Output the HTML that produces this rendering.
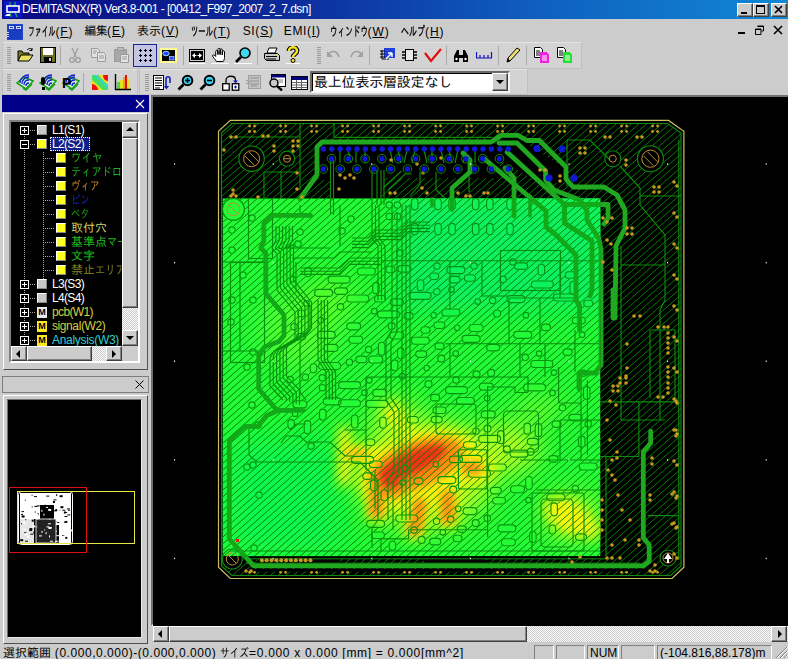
<!DOCTYPE html><html lang="ja"><head><meta charset="utf-8"><title>DEMITASNX(R) Ver3.8-001</title><style>
*{box-sizing:border-box}
html,body{margin:0;padding:0}
body{width:788px;height:659px;position:relative;overflow:hidden;background:#cccccc;font-family:"Liberation Sans","IPAGothic","Noto Sans CJK JP",sans-serif;font-size:12px;color:#000}
.abs{position:absolute}
#title{left:2px;top:0;width:786px;height:19px;background:linear-gradient(90deg,#0a0a82 0%,#0c2a9a 35%,#0f62c0 70%,#1087d6 100%);color:#fff}
#title .txt{position:absolute;left:20px;top:2px;font-size:12px;white-space:nowrap;letter-spacing:0px}
.wbtn{position:absolute;top:3px;width:16px;height:14px;background:#cccccc;border:1px solid;border-color:#fff #404040 #404040 #fff;box-shadow:inset -1px -1px 0 #808080}
#menu{left:0;top:19px;width:788px;height:23px;background:#cccccc}
.mi{position:absolute;top:24px;height:15px;line-height:15px;white-space:nowrap;font-size:12px;transform-origin:0 50%}
.mi u{text-decoration:underline}
.tbar{position:absolute;background:#d3d3d3;border:1px solid #c0c0c0;border-top-color:#e4e4e4}
.grip{position:absolute;width:4px;background:repeating-linear-gradient(180deg,#9a9a9a 0,#9a9a9a 1px,transparent 1px,transparent 2px)}
.sep{position:absolute;width:1px;background:#a8a8a8}
.ico{position:absolute}
.sunken{border:1px solid;border-color:#808080 #fff #fff #808080}
.raised{border:1px solid;border-color:#fff #404040 #404040 #fff;box-shadow:inset -1px -1px 0 #808080;background:#cccccc}
.dither{background-color:#fbfbfb;background-image:linear-gradient(45deg,#cccccc 25%,transparent 25%,transparent 75%,#cccccc 75%),linear-gradient(45deg,#cccccc 25%,transparent 25%,transparent 75%,#cccccc 75%);background-size:2px 2px;background-position:0 0,1px 1px}
.tree{font-size:12px;line-height:14px;white-space:nowrap}
.tree div{position:absolute;white-space:nowrap}
.pane{position:absolute;top:645px;height:16px;border:1px solid;border-color:#808080 #fff #fff #808080;font-size:12px;line-height:14px;padding-left:2px;white-space:nowrap;overflow:hidden}
</style></head><body>
<div id="title" class="abs">
<svg class="abs" style="left:2px;top:1px" width="18" height="17" viewBox="0 0 18 17"><rect x="0" y="0" width="18" height="17" fill="#0a14c8"/><path d="M6 1v4M11 1v4M6 11l1 5M11 11l2 5" stroke="#20a040" stroke-width="1.4" fill="none"/><rect x="3" y="5" width="12" height="6" fill="none" stroke="#fff" stroke-width="1.6"/><path d="M1 15h5v-2h-3z" fill="#fff"/></svg>
<span class="txt"><span style="letter-spacing:-0.52px">DEMITASNX(R) Ver3.8-001 - [00412_F997_2007_2_7.dsn]</span></span>
<div class="wbtn" style="left:735px"><div class="abs" style="left:3px;top:8px;width:6px;height:2px;background:#000"></div></div>
<div class="wbtn" style="left:751px"><div class="abs" style="left:2px;top:1px;width:9px;height:9px;border:1px solid #000;border-top-width:2px"></div></div>
<div class="wbtn" style="left:769px"><svg class="abs" style="left:2px;top:1px" width="10" height="9" viewBox="0 0 10 9"><path d="M1 1l7 7M8 1l-7 7" stroke="#000" stroke-width="1.7"/></svg></div>
</div>
<div id="menu" class="abs"></div>
<svg class="abs" style="left:7px;top:24px" width="16" height="16" viewBox="0 0 16 16"><rect width="16" height="16" fill="#1a3cc0"/><rect x="0" y="0" width="16" height="16" fill="none" stroke="#2a50e0"/><rect x="2.5" y="2.5" width="4" height="2" fill="none" stroke="#cfd8ff"/><rect x="9.5" y="2.5" width="4" height="2" fill="none" stroke="#cfd8ff"/><path d="M1 8v1M1 10v1M1 12v1" stroke="#fff" stroke-width="1.5"/></svg>
<span class="mi" style="left:28.0px"><span style="display:inline-block;transform:scaleX(0.527);transform-origin:0 50%;margin-right:-24.6px;font-size:13px;-webkit-text-stroke:0.35px #000">ファイル</span><span style="letter-spacing:0.9px">(<u>F</u>)</span></span>
<span class="mi" style="left:84.3px"><span style="letter-spacing:-0.60px">編集</span><span style="letter-spacing:0.9px">(<u>E</u>)</span></span>
<span class="mi" style="left:137.0px"><span style="letter-spacing:0.00px">表示</span><span style="letter-spacing:0.9px">(<u>V</u>)</span></span>
<span class="mi" style="left:191.0px"><span style="display:inline-block;transform:scaleX(0.564);transform-origin:0 50%;margin-right:-17.0px;font-size:13px;-webkit-text-stroke:0.35px #000">ツール</span><span style="letter-spacing:0.9px">(<u>T</u>)</span></span>
<span class="mi" style="left:242.7px"><span style="letter-spacing:0.6px">SI</span><span style="letter-spacing:0.9px">(<u>S</u>)</span></span>
<span class="mi" style="left:283.8px"><span style="letter-spacing:0.6px">EMI</span><span style="letter-spacing:0.9px">(<u>I</u>)</span></span>
<span class="mi" style="left:329.5px"><span style="display:inline-block;transform:scaleX(0.585);transform-origin:0 50%;margin-right:-27.0px;font-size:13px;-webkit-text-stroke:0.35px #000">ウィンドウ</span><span style="letter-spacing:0.9px">(<u>W</u>)</span></span>
<span class="mi" style="left:401.0px"><span style="display:inline-block;transform:scaleX(0.615);transform-origin:0 50%;margin-right:-15.0px;font-size:13px;-webkit-text-stroke:0.35px #000">ヘルプ</span><span style="letter-spacing:0.9px">(<u>H</u>)</span></span>
<div class="abs" style="left:738px;top:32px;width:7px;height:2px;background:#000"></div>
<svg class="abs" style="left:754px;top:25px" width="11" height="11" viewBox="0 0 11 11"><path d="M3.5 1h6v5h-2M3.5 1.5h6" stroke="#000" fill="none"/><path d="M1.5 4h5.500v5.500h-5.500zM1.500 4.500h5.500" stroke="#000" fill="none"/></svg>
<svg class="abs" style="left:773px;top:25px" width="10" height="10" viewBox="0 0 10 10"><path d="M1 1l8 8M9 1l-8 8" stroke="#000" stroke-width="1.6"/></svg>
<div class="tbar" style="left:2px;top:42px;width:580px;height:27px"></div>
<div class="tbar" style="left:2px;top:69px;width:136px;height:26px"></div>
<div class="tbar" style="left:139px;top:69px;width:389px;height:26px"></div>
<div class="grip" style="left:7px;top:47px;height:17px"></div>
<div class="grip" style="left:317px;top:47px;height:17px"></div>
<div class="grip" style="left:7px;top:74px;height:17px"></div>
<div class="grip" style="left:145px;top:74px;height:17px"></div>
<div class="sep" style="left:60px;top:46px;height:19px"></div>
<div class="sep" style="left:183px;top:46px;height:19px"></div>
<div class="sep" style="left:257px;top:46px;height:19px"></div>
<div class="sep" style="left:369px;top:46px;height:19px"></div>
<div class="sep" style="left:446px;top:46px;height:19px"></div>
<div class="sep" style="left:498px;top:46px;height:19px"></div>
<div class="sep" style="left:526px;top:46px;height:19px"></div>
<div class="sep" style="left:83px;top:73px;height:19px"></div>
<svg class="ico" style="left:17px;top:47px" width="17" height="16" viewBox="0 0 17 16"><path d="M1 14V4h4l1 2h6v2" fill="#7a7a20" stroke="#000"/><path d="M1 14l3-6h12l-4 6z" fill="#e8e060" stroke="#000"/><path d="M10 3c2-2 4-2 5 0M15 1v2.500h-2.500" stroke="#000" fill="none"/></svg>
<svg class="ico" style="left:40px;top:47px" width="16" height="16" viewBox="0 0 16 16"><rect x="0.500" y="0.500" width="15" height="15" fill="#6e6e20" stroke="#000"/><rect x="3" y="1" width="10" height="7" fill="#fff"/><rect x="4" y="10" width="8" height="5" fill="#000"/><rect x="9" y="11" width="2" height="3" fill="#d0d0d0"/></svg>
<svg class="ico" style="left:68px;top:47px" width="14" height="17" viewBox="0 0 14 17"><path d="M4 1l4 9M10 1l-4 9" stroke="#9a9a9a" fill="none" stroke-width="1.2"/><circle cx="4" cy="13" r="2.300" fill="none" stroke="#9a9a9a" stroke-width="1.200"/><circle cx="10" cy="13" r="2.300" fill="none" stroke="#9a9a9a" stroke-width="1.200"/></svg>
<svg class="ico" style="left:90px;top:47px" width="17" height="16" viewBox="0 0 17 16"><path d="M1.500 1.500h6l2 2v7h-8z" fill="#e2e2e2" stroke="#9a9a9a"/><path d="M7.500 5.500h6l2 2v7h-8z" fill="#e2e2e2" stroke="#9a9a9a"/><path d="M3 4h4M3 6h3M9 9h5M9 11h5" stroke="#9a9a9a"/></svg>
<svg class="ico" style="left:113px;top:47px" width="17" height="16" viewBox="0 0 17 16"><rect x="1.500" y="2.500" width="12" height="12" fill="#a8a8a8" stroke="#9a9a9a"/><rect x="4.500" y="0.500" width="6" height="3" fill="#bcbcbc" stroke="#9a9a9a"/><path d="M7.500 7.500h8v8h-8z" fill="#e4e4e4" stroke="#9a9a9a"/><path d="M9 10h5M9 12h5" stroke="#9a9a9a"/></svg>
<div class="abs" style="left:133px;top:44px;width:24px;height:23px;background:#c4c4e4;border:1px solid #1a2a8a"></div>
<svg class="ico" style="left:138px;top:48px" width="15" height="15" viewBox="0 0 15 15"><path d="M1.0 2.5h3M2.5 1.0v3" stroke="#000" stroke-width="1"/><path d="M1.0 7.5h3M2.5 6.0v3" stroke="#000" stroke-width="1"/><path d="M1.0 12.5h3M2.5 11.0v3" stroke="#000" stroke-width="1"/><path d="M6.0 2.5h3M7.5 1.0v3" stroke="#000" stroke-width="1"/><path d="M6.0 7.5h3M7.5 6.0v3" stroke="#000" stroke-width="1"/><path d="M6.0 12.5h3M7.5 11.0v3" stroke="#000" stroke-width="1"/><path d="M11.0 2.5h3M12.5 1.0v3" stroke="#000" stroke-width="1"/><path d="M11.0 7.5h3M12.5 6.0v3" stroke="#000" stroke-width="1"/><path d="M11.0 12.5h3M12.5 11.0v3" stroke="#000" stroke-width="1"/></svg>
<svg class="ico" style="left:160px;top:48px" width="17" height="15" viewBox="0 0 17 15"><rect x="0" y="0" width="17" height="15" fill="#ffff90"/><rect x="2" y="2" width="13" height="11" fill="#000"/><ellipse cx="6" cy="5.500" rx="3.200" ry="2.300" fill="#2848ff" stroke="#a0e8ff" stroke-width=".9"/><rect x="9.500" y="8.500" width="4.500" height="3.500" fill="#2848ff" stroke="#90c8ff" stroke-width=".8"/></svg>
<svg class="ico" style="left:189px;top:49px" width="16" height="15" viewBox="0 0 16 15"><rect x="0" y="0" width="16" height="13" fill="#000"/><rect x="1.500" y="1.500" width="13" height="10" fill="none" stroke="#fff" stroke-width=".8"/><path d="M3 6.500l3-2.500v5zM13 6.500l-3-2.500v5z" fill="#fff"/><path d="M6 6.500h1.500M8.500 6.500h1.500" stroke="#fff" stroke-width="1.200"/><rect x="0" y="14" width="16" height="1" fill="#fff"/></svg>
<svg class="ico" style="left:211px;top:47px" width="18" height="17" viewBox="0 0 18 17"><g fill="#fff" stroke="#000" stroke-width="1"><path d="M5.500 14.500C4 12 1.500 10 1.500 8.500c1-1.200 2.300-.2 3.200 1V4.500c0-1.600 2.200-1.600 2.200 0v3V2.500c0-1.600 2.200-1.600 2.200 0v5V3c0-1.600 2.200-1.600 2.200 0v4.800V5c0-1.600 2.200-1.600 2.200 0v5.500c0 2-.8 3-1.300 4z"/><path d="M6.900 7.500V4M9.100 7.500V3M11.300 7.800V4" fill="none"/></g><rect x="0" y="16" width="18" height="1" fill="#fff"/></svg>
<svg class="ico" style="left:234px;top:47px" width="18" height="17" viewBox="0 0 18 17"><circle cx="11" cy="6" r="5" fill="#40d8f0" stroke="#000" stroke-width="1.600"/><path d="M7 10l-5 5" stroke="#000" stroke-width="2.600"/><rect x="0" y="16" width="18" height="1" fill="#fff"/></svg>
<svg class="ico" style="left:263px;top:47px" width="18" height="16" viewBox="0 0 18 16"><path d="M4 6l2-5h8l-2 5z" fill="#fff" stroke="#000"/><path d="M1.500 6.500h13l2 2v5h-13l-2-2z" fill="#c8c8c8" stroke="#000"/><path d="M3 9.500h11M3 12h10" stroke="#000"/><rect x="12" y="8" width="2" height="1" fill="#e0e000"/></svg>
<svg class="ico" style="left:286px;top:46px" width="14" height="18" viewBox="0 0 14 18"><path d="M3 5c0-5 8-5 8 0 0 3-4 3-4 6" fill="none" stroke="#000" stroke-width="4.600"/><path d="M3 5c0-5 8-5 8 0 0 3-4 3-4 6" fill="none" stroke="#f4e420" stroke-width="2.600"/><circle cx="7" cy="14.500" r="2" fill="#f0e020" stroke="#000"/><rect x="0" y="17" width="14" height="1" fill="#fff"/></svg>
<svg class="ico" style="left:326px;top:49px" width="15" height="12" viewBox="0 0 15 12"><path d="M2 6c3-5 9-5 11 2" fill="none" stroke="#a0a0a0" stroke-width="1.600"/><path d="M1 2v6h6z" fill="#a0a0a0"/></svg>
<svg class="ico" style="left:349px;top:49px" width="15" height="12" viewBox="0 0 15 12"><path d="M13 6c-3-5-9-5-11 2" fill="none" stroke="#a0a0a0" stroke-width="1.600"/><path d="M14 2v6h-6z" fill="#a0a0a0"/></svg>
<svg class="ico" style="left:378px;top:47px" width="18" height="16" viewBox="0 0 18 16"><rect x="6" y="1" width="11" height="10" fill="#2040e0"/><path d="M2 4h5M2 7h5M2 10h5M4 3v9h7" stroke="#000" fill="none"/><path d="M8 12l6-6M14 6v4M14 6h-4" stroke="#fff" stroke-width="1.500" fill="none"/></svg>
<svg class="ico" style="left:401px;top:48px" width="17" height="14" viewBox="0 0 17 14"><rect x="4.500" y="1.500" width="8" height="11" fill="#e8e8e8" stroke="#000"/><path d="M1 4h3M1 7h3M1 10h3M13 4h3M13 7h3M13 10h3" stroke="#000" stroke-width="1.400"/></svg>
<svg class="ico" style="left:424px;top:48px" width="18" height="15" viewBox="0 0 18 15"><path d="M1 5l6 8L17 1" fill="none" stroke="#e01010" stroke-width="2.200"/></svg>
<svg class="ico" style="left:452px;top:48px" width="18" height="15" viewBox="0 0 18 15"><path d="M2 14V8l3-6h2v5h4V2h2l3 6v6h-5V10H7v4z" fill="#000"/><circle cx="4.500" cy="11" r="1.200" fill="#fff"/><circle cx="13.500" cy="11" r="1.200" fill="#fff"/></svg>
<svg class="ico" style="left:476px;top:52px" width="17" height="7" viewBox="0 0 17 7"><path d="M0.500 0v6h15V0M4 3v3M8 3v3M12 3v3" fill="none" stroke="#1010c0" stroke-width="1.200"/></svg>
<svg class="ico" style="left:505px;top:47px" width="16" height="17" viewBox="0 0 16 17"><path d="M2 15l1-4L12 1l3 2L5 14z" fill="#e8e070" stroke="#000"/><path d="M2 15l1-4 2 3z" fill="#000"/></svg>
<svg class="ico" style="left:533px;top:47px" width="17" height="16" viewBox="0 0 17 16"><path d="M1.500 0.500h6l2 2v8h-8z" fill="#fff" stroke="#000"/><path d="M3 4h4M3 6h4M3 8h4" stroke="#000"/><path d="M7.500 5.500h6l2 2v8h-8z" fill="#f020e0" stroke="#f020e0"/><path d="M7.500 5.500h6l2 2v8h-8z" fill="none" stroke="#f020e0"/><path d="M9 9h5M9 11h5M9 13h5" stroke="#fff"/></svg>
<svg class="ico" style="left:556px;top:47px" width="17" height="16" viewBox="0 0 17 16"><path d="M1.500 0.500h6l2 2v8h-8z" fill="#fff" stroke="#000"/><path d="M3 4h4M3 6h4M3 8h4" stroke="#000"/><path d="M7.500 5.500h6l2 2v8h-8z" fill="#20e030" stroke="#20e030"/><path d="M7.500 5.500h6l2 2v8h-8z" fill="none" stroke="#20e030"/><path d="M9 9h5M9 11h5M9 13h5" stroke="#fff"/></svg>
<svg class="ico" style="left:16px;top:74px" width="18" height="17" viewBox="0 0 18 17"><path d="M1 9l7-6 9 4-7 8z" fill="#d8f0d8" stroke="#18a018" stroke-width="1.600"/><path d="M8 11c0-3 2-5 5-5M6 10c0-4 3-7 7-7M4 9c0-5 4-8 9-8M10 12c0-2 1-3 3-3" fill="none" stroke="#1020d0" stroke-width="1.300"/><path d="M7 14l3 2 6-6" fill="none" stroke="#18a018" stroke-width="1.600"/></svg>
<svg class="ico" style="left:39px;top:74px" width="18" height="17" viewBox="0 0 18 17"><path d="M1 9l7-6 9 4-7 8z" fill="#d8f0d8" stroke="#18a018" stroke-width="1.600"/><path d="M8 11c0-3 2-5 5-5M6 10c0-4 3-7 7-7M4 9c0-5 4-8 9-8M10 12c0-2 1-3 3-3" fill="none" stroke="#1020d0" stroke-width="1.300"/><path d="M7 14l3 2 6-6" fill="none" stroke="#18a018" stroke-width="1.600"/></svg>
<div class="abs" style="left:41px;top:77px;width:4px;height:8px;background:#000;border-radius:2px"></div><div class="abs" style="left:42px;top:87px;width:3px;height:3px;background:#000"></div>
<svg class="ico" style="left:62px;top:74px" width="18" height="17" viewBox="0 0 18 17"><path d="M1 9l7-6 9 4-7 8z" fill="#d8f0d8" stroke="#18a018" stroke-width="1.600"/><path d="M8 11c0-3 2-5 5-5M6 10c0-4 3-7 7-7M4 9c0-5 4-8 9-8M10 12c0-2 1-3 3-3" fill="none" stroke="#1020d0" stroke-width="1.300"/><path d="M7 14l3 2 6-6" fill="none" stroke="#18a018" stroke-width="1.600"/></svg>
<div class="abs" style="left:62px;top:76px;font-weight:bold;font-size:14px;line-height:14px;color:#000">P</div>
<svg class="ico" style="left:92px;top:75px" width="16" height="15" viewBox="0 0 16 15"><rect width="16" height="15" fill="#f0e020"/><path d="M0 0h6L16 10v5h-5L0 5z" fill="#40e060"/><path d="M2 0h3L16 11v3z" fill="#40d0e0" opacity=".9"/><path d="M0 9v6h6c0-3-3-6-6-6zM16 6V0h-5c0 3 2 6 5 6z" fill="#f01010"/></svg>
<svg class="ico" style="left:114px;top:74px" width="17" height="17" viewBox="0 0 17 17"><rect x="3" y="8" width="3" height="7" fill="#40e040"/><rect x="6" y="6" width="3" height="9" fill="#e8e020"/><rect x="9" y="3" width="2" height="12" fill="#f0a020"/><rect x="11" y="1" width="2" height="14" fill="#e01010"/><rect x="13" y="5" width="3" height="10" fill="#e8e020"/><path d="M1.500 0v15.500H17" fill="none" stroke="#000" stroke-width="1.400"/></svg>
<svg class="ico" style="left:153px;top:74px" width="18" height="17" viewBox="0 0 18 17"><rect x="0.500" y="1.500" width="10" height="14" fill="#fff" stroke="#000"/><path d="M2 4h7M2 6.500h7M2 9h7M2 11.500h7M2 14h5" stroke="#000"/><path d="M13 14V5c0-3 4-3 4 0v4" fill="none" stroke="#1020c0" stroke-width="1.600"/><path d="M11 12l2.500 3.500L16 12z" fill="#1020c0"/></svg>
<svg class="ico" style="left:177px;top:74px" width="17" height="17" viewBox="0 0 17 17"><circle cx="10.500" cy="6.500" r="4.800" fill="#40d0f0" stroke="#000" stroke-width="2"/><path d="M6.500 10.500l-5 5" stroke="#000" stroke-width="2.800"/><path d="M8 6.500h5" stroke="#000" stroke-width="1.600"/><path d="M10.500 4v5" stroke="#000" stroke-width="1.600"/></svg>
<svg class="ico" style="left:199px;top:74px" width="17" height="17" viewBox="0 0 17 17"><circle cx="10.500" cy="6.500" r="4.800" fill="#40d0f0" stroke="#000" stroke-width="2"/><path d="M6.500 10.500l-5 5" stroke="#000" stroke-width="2.800"/><path d="M8 6.500h5" stroke="#000" stroke-width="1.600"/></svg>
<svg class="ico" style="left:222px;top:74px" width="18" height="17" viewBox="0 0 18 17"><rect x="0.700" y="9.700" width="6.500" height="6.500" fill="#fff" stroke="#000" stroke-width="1.300"/><rect x="10.300" y="9.700" width="6.500" height="6.500" fill="#fff" stroke="#000" stroke-width="1.300"/><path d="M4 9V6c0-5 9.500-5 9.500 0v2" fill="none" stroke="#000" stroke-width="1.300"/><path d="M11 6.500h5l-2.500 3z" fill="#1020c0"/><path d="M12 13h3M13.500 11.500v3" stroke="#1020c0" stroke-width="1.200"/></svg>
<svg class="ico" style="left:245px;top:74px" width="17" height="17" viewBox="0 0 17 17"><rect x="3.500" y="1.500" width="12" height="13" fill="#c4c4c4" stroke="#a0a0a0"/><path d="M5 4h9M5 7h9M5 10h9M1 6l4 2-4 2M6 12h6" stroke="#a0a0a0" fill="none" stroke-width="1.300"/></svg>
<svg class="ico" style="left:268px;top:74px" width="18" height="17" viewBox="0 0 18 17"><rect x="3.500" y="0.500" width="14" height="12" fill="#fff" stroke="#000"/><rect x="4" y="1" width="13" height="2.500" fill="#000080"/><circle cx="6" cy="9" r="4" fill="#c8c8c8" stroke="#000" stroke-width="1.500"/><path d="M9 12l5 4.500" stroke="#000" stroke-width="2.400"/><path d="M10 6h5M11 8h4" stroke="#808080"/></svg>
<svg class="ico" style="left:291px;top:76px" width="18" height="14" viewBox="0 0 18 14"><rect x="0.500" y="0.500" width="16" height="13" fill="#fff" stroke="#000"/><rect x="1" y="1" width="15" height="3" fill="#000080"/><path d="M1 6.500h15M1 9h15M1 11.500h15M5.500 4v9M10.500 4v9" stroke="#606060"/></svg>
<div class="abs" style="left:310px;top:71px;width:200px;height:22px;background:#fff;border:2px solid;border-color:#6a6a6a #f4f4f4 #f4f4f4 #6a6a6a;box-shadow:inset 1px 1px 0 #000"></div>
<div class="abs" id="cbt" style="left:314px;top:73px;font-size:14px;line-height:18px;white-space:nowrap;letter-spacing:-0.2px">最上位表示層設定なし</div>
<div class="abs raised" style="left:492px;top:73px;width:16px;height:18px"><div class="abs" style="left:3px;top:6px;width:0;height:0;border:4px solid transparent;border-top:4px solid #000;border-bottom:0"></div></div>
<div class="abs" style="left:2px;top:95px;width:147px;height:17px;background:#00008a"></div>
<svg class="abs" style="left:135px;top:99px" width="10" height="10" viewBox="0 0 10 10"><path d="M1 1l8 8M9 1l-8 8" stroke="#fff" stroke-width="1.100"/></svg>
<div class="abs" style="left:3px;top:113px;width:145px;height:257px;border:1px solid;border-color:#fff #505050 #505050 #fff;background:#cccccc"></div>
<div class="abs" style="left:9px;top:120px;width:131px;height:243px;border:2px solid;border-color:#808080 #fff #fff #808080"></div>
<div class="abs tree" style="left:11px;top:122px;width:111px;height:224px;background:#000;overflow:hidden" id="treebox">
<div style="left:13px;top:12px;width:1px;height:210px;background:repeating-linear-gradient(180deg,#aaa 0,#aaa 1px,transparent 1px,transparent 2px)"></div>
<div style="left:32px;top:30px;width:1px;height:127px;background:repeating-linear-gradient(180deg,#aaa 0,#aaa 1px,transparent 1px,transparent 2px)"></div>
<div style="left:9px;top:4px;width:9px;height:9px;border:1px solid #fff;background:#000"></div>
<div style="left:11px;top:8px;width:5px;height:1px;background:#fff"></div>
<div style="left:13px;top:6px;width:1px;height:5px;background:#fff"></div>
<div style="left:19px;top:8px;width:6px;height:1px;background:repeating-linear-gradient(90deg,#aaa 0,#aaa 1px,transparent 1px,transparent 2px)"></div>
<div style="left:26px;top:3px;width:10px;height:10px;background:#c8c8c8;border:1px solid;border-color:#fff #888 #888 #fff"></div>
<div class="tt" style="left:41px;top:1px;height:14px;line-height:14px;color:#fff;transform-origin:0 50%"><span style="letter-spacing:-0.67px">L1(S1)</span></div>
<div style="left:9px;top:18px;width:9px;height:9px;border:1px solid #fff;background:#000"></div>
<div style="left:11px;top:22px;width:5px;height:1px;background:#fff"></div>
<div style="left:19px;top:22px;width:6px;height:1px;background:repeating-linear-gradient(90deg,#aaa 0,#aaa 1px,transparent 1px,transparent 2px)"></div>
<div style="left:26px;top:17px;width:10px;height:10px;background:#ffff20;border:1px solid;border-color:#fff #888 #888 #fff"></div>
<div style="left:39px;top:15px;width:40px;height:14px;background:#10208a;outline:1px dotted #fff;outline-offset:-1px"></div>
<div class="tt" style="left:41px;top:15px;height:14px;line-height:14px;color:#fff;transform-origin:0 50%"><span style="letter-spacing:-0.67px">L2(S2)</span></div>
<div style="left:32px;top:36px;width:12px;height:1px;background:repeating-linear-gradient(90deg,#aaa 0,#aaa 1px,transparent 1px,transparent 2px)"></div>
<div style="left:45px;top:31px;width:10px;height:10px;background:#ffff20;border:1px solid;border-color:#fff #888 #888 #fff"></div>
<div class="tt" style="left:60px;top:29px;height:14px;line-height:14px;color:#20b020;transform-origin:0 50%"><span style="display:inline-block;transform:scaleX(0.872);transform-origin:0 50%;margin-right:-4.6px;">ワイヤ</span></div>
<div style="left:32px;top:50px;width:12px;height:1px;background:repeating-linear-gradient(90deg,#aaa 0,#aaa 1px,transparent 1px,transparent 2px)"></div>
<div style="left:45px;top:45px;width:10px;height:10px;background:#ffff20;border:1px solid;border-color:#fff #888 #888 #fff"></div>
<div class="tt" style="left:60px;top:43px;height:14px;line-height:14px;color:#20b020;transform-origin:0 50%"><span style="display:inline-block;transform:scaleX(0.850);transform-origin:0 50%;margin-right:-12.6px;">ティアドロップ</span></div>
<div style="left:32px;top:64px;width:12px;height:1px;background:repeating-linear-gradient(90deg,#aaa 0,#aaa 1px,transparent 1px,transparent 2px)"></div>
<div style="left:45px;top:59px;width:10px;height:10px;background:#ffff20;border:1px solid;border-color:#fff #888 #888 #fff"></div>
<div class="tt" style="left:60px;top:57px;height:14px;line-height:14px;color:#c08030;transform-origin:0 50%"><span style="display:inline-block;transform:scaleX(0.792);transform-origin:0 50%;margin-right:-7.5px;">ヴィア</span></div>
<div style="left:32px;top:78px;width:12px;height:1px;background:repeating-linear-gradient(90deg,#aaa 0,#aaa 1px,transparent 1px,transparent 2px)"></div>
<div style="left:45px;top:73px;width:10px;height:10px;background:#ffff20;border:1px solid;border-color:#fff #888 #888 #fff"></div>
<div class="tt" style="left:60px;top:71px;height:14px;line-height:14px;color:#1820c0;transform-origin:0 50%"><span style="display:inline-block;transform:scaleX(0.779);transform-origin:0 50%;margin-right:-5.3px;">ピン</span></div>
<div style="left:32px;top:92px;width:12px;height:1px;background:repeating-linear-gradient(90deg,#aaa 0,#aaa 1px,transparent 1px,transparent 2px)"></div>
<div style="left:45px;top:87px;width:10px;height:10px;background:#ffff20;border:1px solid;border-color:#fff #888 #888 #fff"></div>
<div class="tt" style="left:60px;top:85px;height:14px;line-height:14px;color:#109010;transform-origin:0 50%"><span style="display:inline-block;transform:scaleX(0.779);transform-origin:0 50%;margin-right:-5.3px;">ベタ</span></div>
<div style="left:32px;top:106px;width:12px;height:1px;background:repeating-linear-gradient(90deg,#aaa 0,#aaa 1px,transparent 1px,transparent 2px)"></div>
<div style="left:45px;top:101px;width:10px;height:10px;background:#ffff20;border:1px solid;border-color:#fff #888 #888 #fff"></div>
<div class="tt" style="left:60px;top:99px;height:14px;line-height:14px;color:#d0d060;transform-origin:0 50%">取付穴</div>
<div style="left:32px;top:120px;width:12px;height:1px;background:repeating-linear-gradient(90deg,#aaa 0,#aaa 1px,transparent 1px,transparent 2px)"></div>
<div style="left:45px;top:115px;width:10px;height:10px;background:#ffff20;border:1px solid;border-color:#fff #888 #888 #fff"></div>
<div class="tt" style="left:60px;top:113px;height:14px;line-height:14px;color:#20c020;transform-origin:0 50%">基準点<span style="display:inline-block;transform:scaleX(0.850);transform-origin:0 50%;margin-right:-5.4px;">マーク</span></div>
<div style="left:32px;top:134px;width:12px;height:1px;background:repeating-linear-gradient(90deg,#aaa 0,#aaa 1px,transparent 1px,transparent 2px)"></div>
<div style="left:45px;top:129px;width:10px;height:10px;background:#ffff20;border:1px solid;border-color:#fff #888 #888 #fff"></div>
<div class="tt" style="left:60px;top:127px;height:14px;line-height:14px;color:#20c020;transform-origin:0 50%">文字</div>
<div style="left:32px;top:148px;width:12px;height:1px;background:repeating-linear-gradient(90deg,#aaa 0,#aaa 1px,transparent 1px,transparent 2px)"></div>
<div style="left:45px;top:143px;width:10px;height:10px;background:#ffff20;border:1px solid;border-color:#fff #888 #888 #fff"></div>
<div class="tt" style="left:60px;top:141px;height:14px;line-height:14px;color:#808020;transform-origin:0 50%">禁止<span style="display:inline-block;transform:scaleX(0.850);transform-origin:0 50%;margin-right:-5.4px;">エリア</span></div>
<div style="left:9px;top:158px;width:9px;height:9px;border:1px solid #fff;background:#000"></div>
<div style="left:11px;top:162px;width:5px;height:1px;background:#fff"></div>
<div style="left:13px;top:160px;width:1px;height:5px;background:#fff"></div>
<div style="left:19px;top:162px;width:6px;height:1px;background:repeating-linear-gradient(90deg,#aaa 0,#aaa 1px,transparent 1px,transparent 2px)"></div>
<div style="left:26px;top:157px;width:10px;height:10px;background:#c8c8c8;border:1px solid;border-color:#fff #888 #888 #fff"></div>
<div class="tt" style="left:41px;top:155px;height:14px;line-height:14px;color:#fff;transform-origin:0 50%"><span style="letter-spacing:-0.67px">L3(S3)</span></div>
<div style="left:9px;top:172px;width:9px;height:9px;border:1px solid #fff;background:#000"></div>
<div style="left:11px;top:176px;width:5px;height:1px;background:#fff"></div>
<div style="left:13px;top:174px;width:1px;height:5px;background:#fff"></div>
<div style="left:19px;top:176px;width:6px;height:1px;background:repeating-linear-gradient(90deg,#aaa 0,#aaa 1px,transparent 1px,transparent 2px)"></div>
<div style="left:26px;top:171px;width:10px;height:10px;background:#c8c8c8;border:1px solid;border-color:#fff #888 #888 #fff"></div>
<div class="tt" style="left:41px;top:169px;height:14px;line-height:14px;color:#fff;transform-origin:0 50%"><span style="letter-spacing:-0.67px">L4(S4)</span></div>
<div style="left:9px;top:186px;width:9px;height:9px;border:1px solid #fff;background:#000"></div>
<div style="left:11px;top:190px;width:5px;height:1px;background:#fff"></div>
<div style="left:13px;top:188px;width:1px;height:5px;background:#fff"></div>
<div style="left:19px;top:190px;width:6px;height:1px;background:repeating-linear-gradient(90deg,#aaa 0,#aaa 1px,transparent 1px,transparent 2px)"></div>
<div style="left:26px;top:185px;width:10px;height:11px;background:#e8e8e8;color:#000;font-size:9px;line-height:11px;font-weight:bold;text-align:center;overflow:hidden">M</div>
<div class="tt" style="left:41px;top:183px;height:14px;line-height:14px;color:#d0d040;transform-origin:0 50%"><span style="letter-spacing:-0.62px">pcb(W1)</span></div>
<div style="left:9px;top:200px;width:9px;height:9px;border:1px solid #fff;background:#000"></div>
<div style="left:11px;top:204px;width:5px;height:1px;background:#fff"></div>
<div style="left:13px;top:202px;width:1px;height:5px;background:#fff"></div>
<div style="left:19px;top:204px;width:6px;height:1px;background:repeating-linear-gradient(90deg,#aaa 0,#aaa 1px,transparent 1px,transparent 2px)"></div>
<div style="left:26px;top:199px;width:10px;height:11px;background:#ffe820;color:#000;font-size:9px;line-height:11px;font-weight:bold;text-align:center;overflow:hidden">M</div>
<div class="tt" style="left:41px;top:197px;height:14px;line-height:14px;color:#d0d040;transform-origin:0 50%"><span style="letter-spacing:-0.41px">signal(W2)</span></div>
<div style="left:9px;top:214px;width:9px;height:9px;border:1px solid #fff;background:#000"></div>
<div style="left:11px;top:218px;width:5px;height:1px;background:#fff"></div>
<div style="left:13px;top:216px;width:1px;height:5px;background:#fff"></div>
<div style="left:19px;top:218px;width:6px;height:1px;background:repeating-linear-gradient(90deg,#aaa 0,#aaa 1px,transparent 1px,transparent 2px)"></div>
<div style="left:26px;top:213px;width:10px;height:11px;background:#ffe820;color:#000;font-size:9px;line-height:11px;font-weight:bold;text-align:center;overflow:hidden">M</div>
<div class="tt" style="left:41px;top:211px;height:14px;line-height:14px;color:#30d0d0;transform-origin:0 50%"><span style="letter-spacing:-0.31px">Analysis(W3)</span></div>
</div>
<div class="abs dither" style="left:122px;top:122px;width:16px;height:224px"></div>
<div class="abs raised" style="left:122px;top:122px;width:16px;height:16px"><div class="abs" style="left:3px;top:4px;width:0;height:0;border:4px solid transparent;border-bottom:4px solid #000;border-top:0"></div></div>
<div class="abs raised" style="left:122px;top:138px;width:16px;height:170px"></div>
<div class="abs raised" style="left:122px;top:330px;width:16px;height:16px"><div class="abs" style="left:3px;top:5px;width:0;height:0;border:4px solid transparent;border-top:4px solid #000;border-bottom:0"></div></div>
<div class="abs dither" style="left:11px;top:346px;width:111px;height:15px"></div>
<div class="abs raised" style="left:11px;top:346px;width:16px;height:15px"><div class="abs" style="left:4px;top:3px;width:0;height:0;border:4px solid transparent;border-right:4px solid #000;border-left:0"></div></div>
<div class="abs raised" style="left:27px;top:346px;width:65px;height:15px"></div>
<div class="abs raised" style="left:106px;top:346px;width:16px;height:15px"><div class="abs" style="left:5px;top:3px;width:0;height:0;border:4px solid transparent;border-left:4px solid #000;border-right:0"></div></div>
<div class="abs" style="left:122px;top:346px;width:16px;height:15px;background:#cccccc"></div>
<div class="abs" style="left:2px;top:376px;width:147px;height:17px;border:1px solid #7c7c7c;border-right-color:#8c8c8c;background:#cccccc"></div>
<svg class="abs" style="left:135px;top:380px" width="9" height="9" viewBox="0 0 9 9"><path d="M0.500 0.500l8 8M8.500 0.500l-8 8" stroke="#000" stroke-width="1"/></svg>
<div class="abs" style="left:3px;top:395px;width:145px;height:249px;border:1px solid;border-color:#fff #505050 #505050 #fff"></div>
<div class="abs" style="left:7px;top:399px;width:135px;height:239px;border:1px solid;border-color:#707070 #e8e8e8 #e8e8e8 #707070;background:#000"></div>
<svg class="abs" style="left:8px;top:400px" width="133" height="237" viewBox="8 400 133 237">
<rect x="8" y="400" width="133" height="237" fill="#000"/>
<rect x="18.500" y="491.500" width="54" height="53" rx="3" fill="none" stroke="#fff"/>
<g fill="#fff">
<rect x="20" y="493" width="51" height="12"/>
<rect x="20" y="505" width="20" height="14"/><rect x="54" y="505" width="17" height="20"/><rect x="20" y="519" width="14" height="24" opacity=".9"/><rect x="59" y="525" width="12" height="18"/>
</g>
<g fill="#000">
<rect x="31.7" y="519.7" width="2.0" height="2.0"/>
<rect x="43.2" y="521.5" width="3.0" height="1.0"/>
<rect x="64.5" y="516.0" width="3.0" height="1.0"/>
<rect x="29.4" y="528.1" width="3.0" height="2.0"/>
<rect x="43.3" y="524.3" width="1.0" height="1.0"/>
<rect x="51.1" y="535.5" width="3.0" height="1.0"/>
<rect x="56.3" y="525.9" width="1.0" height="1.0"/>
<rect x="57.2" y="522.0" width="2.0" height="1.0"/>
<rect x="60.4" y="506.2" width="3.0" height="2.0"/>
<rect x="65.1" y="512.0" width="2.0" height="1.0"/>
<rect x="55.7" y="521.3" width="1.0" height="1.0"/>
<rect x="24.8" y="499.7" width="1.0" height="1.0"/>
<rect x="67.3" y="514.4" width="3.0" height="1.0"/>
<rect x="40.6" y="533.8" width="3.0" height="1.0"/>
<rect x="46.2" y="513.0" width="1.0" height="1.0"/>
<rect x="53.4" y="538.5" width="2.0" height="2.0"/>
<rect x="52.9" y="501.0" width="2.0" height="2.0"/>
<rect x="64.3" y="520.9" width="3.0" height="2.0"/>
<rect x="30.3" y="533.7" width="3.0" height="1.0"/>
<rect x="34.0" y="496.1" width="3.0" height="1.0"/>
<rect x="24.3" y="532.2" width="2.0" height="1.0"/>
<rect x="21.0" y="513.9" width="2.0" height="1.0"/>
<rect x="22.2" y="523.1" width="1.0" height="1.0"/>
<rect x="55.2" y="509.2" width="2.0" height="2.0"/>
<rect x="31.6" y="494.8" width="1.0" height="1.0"/>
<rect x="25.3" y="519.2" width="1.0" height="1.0"/>
<rect x="34.3" y="505.9" width="3.0" height="1.0"/>
<rect x="68.0" y="509.7" width="2.0" height="1.0"/>
<rect x="63.9" y="511.5" width="2.0" height="2.0"/>
<rect x="38.9" y="535.5" width="3.0" height="2.0"/>
<rect x="25.0" y="540.7" width="3.0" height="1.0"/>
<rect x="41.1" y="528.3" width="1.0" height="1.0"/>
<rect x="41.4" y="505.7" width="2.0" height="2.0"/>
<rect x="36.6" y="531.6" width="3.0" height="1.0"/>
<rect x="21.0" y="523.2" width="3.0" height="1.0"/>
<rect x="22.9" y="523.7" width="2.0" height="1.0"/>
<rect x="53.3" y="510.3" width="3.0" height="1.0"/>
<rect x="56.2" y="494.1" width="1.0" height="2.0"/>
<rect x="21.0" y="511.1" width="3.0" height="1.0"/>
<rect x="34.6" y="522.5" width="1.0" height="1.0"/>
<rect x="29.1" y="530.1" width="3.0" height="1.0"/>
<rect x="34.7" y="511.5" width="1.0" height="2.0"/>
<rect x="53.5" y="499.4" width="3.0" height="1.0"/>
<rect x="52.0" y="506.2" width="2.0" height="1.0"/>
<rect x="53.2" y="524.8" width="1.0" height="1.0"/>
<rect x="49.4" y="539.5" width="3.0" height="1.0"/>
<rect x="41.5" y="534.9" width="1.0" height="1.0"/>
<rect x="36.5" y="524.9" width="3.0" height="1.0"/>
<rect x="33.3" y="531.6" width="1.0" height="2.0"/>
<rect x="66.9" y="508.4" width="3.0" height="1.0"/>
<rect x="62.3" y="509.7" width="3.0" height="1.0"/>
<rect x="59.5" y="509.9" width="1.0" height="1.0"/>
<rect x="34.3" y="531.9" width="2.0" height="1.0"/>
<rect x="37.0" y="513.4" width="2.0" height="2.0"/>
<rect x="40.1" y="538.1" width="1.0" height="1.0"/>
<rect x="20.2" y="539.2" width="3.0" height="2.0"/>
<rect x="41.3" y="539.6" width="3.0" height="1.0"/>
<rect x="21.6" y="515.4" width="3.0" height="2.0"/>
<rect x="45.4" y="507.2" width="2.0" height="1.0"/>
<rect x="62.2" y="535.0" width="2.0" height="1.0"/>
<rect x="59.7" y="495.2" width="3.0" height="2.0"/>
<rect x="65.3" y="536.9" width="2.0" height="2.0"/>
<rect x="22.4" y="516.6" width="1.0" height="1.0"/>
<rect x="44.7" y="504.7" width="1.0" height="2.0"/>
<rect x="46.3" y="495.6" width="3.0" height="1.0"/>
<rect x="36.7" y="505.4" width="3.0" height="1.0"/>
<rect x="59.8" y="496.0" width="1.0" height="1.0"/>
<rect x="26.0" y="536.5" width="1.0" height="1.0"/>
<rect x="31.7" y="506.4" width="1.0" height="1.0"/>
<rect x="43.9" y="521.0" width="2.0" height="1.0"/>
</g>
<rect x="36" y="519" width="20" height="24" fill="#222" stroke="#fff" stroke-width=".8"/>
<g fill="#fff">
<rect x="57.8" y="514.4" width="3.0" height="2.0"/>
<rect x="46.0" y="506.9" width="2.0" height="1.0"/>
<rect x="62.9" y="534.5" width="1.0" height="1.0"/>
<rect x="22.5" y="523.3" width="1.0" height="2.0"/>
<rect x="24.3" y="524.1" width="2.0" height="1.0"/>
<rect x="35.7" y="518.3" width="3.0" height="1.0"/>
<rect x="49.3" y="518.7" width="1.0" height="1.0"/>
<rect x="41.4" y="509.8" width="1.0" height="2.0"/>
<rect x="56.2" y="535.2" width="3.0" height="1.0"/>
<rect x="22.1" y="522.5" width="3.0" height="2.0"/>
<rect x="39.0" y="535.4" width="3.0" height="1.0"/>
<rect x="22.7" y="528.8" width="3.0" height="1.0"/>
<rect x="41.0" y="531.4" width="2.0" height="1.0"/>
<rect x="32.3" y="525.4" width="3.0" height="2.0"/>
<rect x="23.6" y="521.1" width="2.0" height="1.0"/>
<rect x="64.0" y="540.6" width="2.0" height="2.0"/>
<rect x="59.5" y="515.0" width="2.0" height="2.0"/>
<rect x="26.2" y="535.9" width="3.0" height="2.0"/>
<rect x="59.6" y="530.4" width="3.0" height="1.0"/>
<rect x="48.2" y="508.9" width="3.0" height="2.0"/>
<rect x="20.2" y="510.5" width="2.0" height="1.0"/>
<rect x="46.4" y="526.4" width="3.0" height="1.0"/>
<rect x="29.0" y="505.9" width="1.0" height="1.0"/>
<rect x="62.2" y="530.6" width="3.0" height="1.0"/>
<rect x="49.0" y="535.4" width="1.0" height="2.0"/>
<rect x="45.6" y="532.2" width="1.0" height="2.0"/>
<rect x="57.4" y="540.5" width="1.0" height="2.0"/>
<rect x="36.2" y="526.4" width="1.0" height="1.0"/>
<rect x="69.9" y="529.5" width="2.0" height="2.0"/>
<rect x="55.0" y="540.8" width="2.0" height="1.0"/>
<rect x="50.0" y="540.7" width="3.0" height="1.0"/>
<rect x="68.3" y="519.3" width="1.0" height="1.0"/>
<rect x="62.2" y="541.7" width="2.0" height="2.0"/>
<rect x="48.4" y="527.0" width="3.0" height="2.0"/>
<rect x="44.2" y="529.4" width="1.0" height="1.0"/>
<rect x="24.8" y="533.4" width="3.0" height="2.0"/>
<rect x="67.5" y="527.3" width="1.0" height="1.0"/>
<rect x="33.4" y="512.6" width="3.0" height="2.0"/>
<rect x="35.7" y="513.8" width="3.0" height="2.0"/>
<rect x="67.7" y="516.2" width="3.0" height="1.0"/>
<rect x="49.8" y="527.2" width="2.0" height="1.0"/>
<rect x="35.4" y="515.2" width="2.0" height="1.0"/>
<rect x="28.6" y="518.7" width="2.0" height="1.0"/>
<rect x="58.7" y="510.5" width="3.0" height="1.0"/>
<rect x="55.1" y="512.8" width="3.0" height="2.0"/>
<rect x="47.9" y="523.3" width="3.0" height="1.0"/>
<rect x="62.8" y="520.2" width="3.0" height="1.0"/>
<rect x="43.4" y="513.7" width="1.0" height="2.0"/>
<rect x="55.9" y="530.7" width="1.0" height="1.0"/>
<rect x="32.1" y="512.2" width="2.0" height="1.0"/>
</g>
<rect x="17.500" y="491.500" width="117" height="52" fill="none" stroke="#e8e840" stroke-width="1"/>
<rect x="9.500" y="487.500" width="77" height="65" fill="none" stroke="#e01010" stroke-width="1"/>
</svg>
<div class="abs" style="left:151px;top:95px;width:640px;height:531px;border:2px solid;border-color:#707070 #fff #fff #707070;background:#000"></div>
<svg class="abs" style="left:153px;top:97px" width="635" height="529" viewBox="153 97 635 529">
<defs>
<pattern id="hA" width="4.6" height="4.6" patternUnits="userSpaceOnUse" patternTransform="rotate(-43)"><rect x="0" y="0" width="4.600" height="0.800" fill="#009800"/></pattern>
<pattern id="hB" width="4.6" height="4.6" patternUnits="userSpaceOnUse" patternTransform="rotate(-43)"><rect x="0" y="0" width="4.600" height="0.750" fill="#007400"/></pattern>
<filter id="b14" x="-50%" y="-50%" width="200%" height="200%"><feGaussianBlur stdDeviation="12"/></filter>
<filter id="b8" x="-50%" y="-50%" width="200%" height="200%"><feGaussianBlur stdDeviation="6"/></filter>
<filter id="b5" x="-50%" y="-50%" width="200%" height="200%"><feGaussianBlur stdDeviation="4"/></filter>
<filter id="b3" x="-50%" y="-50%" width="200%" height="200%"><feGaussianBlur stdDeviation="3"/></filter>
<clipPath id="cH"><rect x="222.5" y="198.3" width="378.0" height="357.9"/></clipPath>
<clipPath id="cB"><polygon points="232.0,123.5 667.5,123.5 681.0,133.0 681.0,566.0 670.5,575.5 232.0,575.5 221.5,566.0 221.5,133.0"/></clipPath>
<clipPath id="cO"><path clip-rule="evenodd" d="M153 97H788V626H153Z M222.5 198.3H600.5V556.2H222.5Z"/></clipPath>
<g id="hl" stroke="currentColor">
<path d="M215 1.2L690 -416.8"/>
<path d="M215 7.9L690 -410.1"/>
<path d="M215 14.6L690 -403.4"/>
<path d="M215 21.3L690 -396.7"/>
<path d="M215 28.0L690 -390.0"/>
<path d="M215 34.7L690 -383.3"/>
<path d="M215 41.4L690 -376.6"/>
<path d="M215 48.1L690 -369.9"/>
<path d="M215 54.8L690 -363.2"/>
<path d="M215 61.5L690 -356.5"/>
<path d="M215 68.2L690 -349.8"/>
<path d="M215 74.9L690 -343.1"/>
<path d="M215 81.6L690 -336.4"/>
<path d="M215 88.3L690 -329.7"/>
<path d="M215 95.0L690 -323.0"/>
<path d="M215 101.7L690 -316.3"/>
<path d="M215 108.4L690 -309.6"/>
<path d="M215 115.1L690 -302.9"/>
<path d="M215 121.8L690 -296.2"/>
<path d="M215 128.5L690 -289.5"/>
<path d="M215 135.2L690 -282.8"/>
<path d="M215 141.9L690 -276.1"/>
<path d="M215 148.6L690 -269.4"/>
<path d="M215 155.3L690 -262.7"/>
<path d="M215 162.0L690 -256.0"/>
<path d="M215 168.7L690 -249.3"/>
<path d="M215 175.4L690 -242.6"/>
<path d="M215 182.1L690 -235.9"/>
<path d="M215 188.8L690 -229.2"/>
<path d="M215 195.5L690 -222.5"/>
<path d="M215 202.2L690 -215.8"/>
<path d="M215 208.9L690 -209.1"/>
<path d="M215 215.6L690 -202.4"/>
<path d="M215 222.3L690 -195.7"/>
<path d="M215 229.0L690 -189.0"/>
<path d="M215 235.7L690 -182.3"/>
<path d="M215 242.4L690 -175.6"/>
<path d="M215 249.1L690 -168.9"/>
<path d="M215 255.8L690 -162.2"/>
<path d="M215 262.5L690 -155.5"/>
<path d="M215 269.2L690 -148.8"/>
<path d="M215 275.9L690 -142.1"/>
<path d="M215 282.6L690 -135.4"/>
<path d="M215 289.3L690 -128.7"/>
<path d="M215 296.0L690 -122.0"/>
<path d="M215 302.7L690 -115.3"/>
<path d="M215 309.4L690 -108.6"/>
<path d="M215 316.1L690 -101.9"/>
<path d="M215 322.8L690 -95.2"/>
<path d="M215 329.5L690 -88.5"/>
<path d="M215 336.2L690 -81.8"/>
<path d="M215 342.9L690 -75.1"/>
<path d="M215 349.6L690 -68.4"/>
<path d="M215 356.3L690 -61.7"/>
<path d="M215 363.0L690 -55.0"/>
<path d="M215 369.7L690 -48.3"/>
<path d="M215 376.4L690 -41.6"/>
<path d="M215 383.1L690 -34.9"/>
<path d="M215 389.8L690 -28.2"/>
<path d="M215 396.5L690 -21.5"/>
<path d="M215 403.2L690 -14.8"/>
<path d="M215 409.9L690 -8.1"/>
<path d="M215 416.6L690 -1.4"/>
<path d="M215 423.3L690 5.3"/>
<path d="M215 430.0L690 12.0"/>
<path d="M215 436.7L690 18.7"/>
<path d="M215 443.4L690 25.4"/>
<path d="M215 450.1L690 32.1"/>
<path d="M215 456.8L690 38.8"/>
<path d="M215 463.5L690 45.5"/>
<path d="M215 470.2L690 52.2"/>
<path d="M215 476.9L690 58.9"/>
<path d="M215 483.6L690 65.6"/>
<path d="M215 490.3L690 72.3"/>
<path d="M215 497.0L690 79.0"/>
<path d="M215 503.7L690 85.7"/>
<path d="M215 510.4L690 92.4"/>
<path d="M215 517.1L690 99.1"/>
<path d="M215 523.8L690 105.8"/>
<path d="M215 530.5L690 112.5"/>
<path d="M215 537.2L690 119.2"/>
<path d="M215 543.9L690 125.9"/>
<path d="M215 550.6L690 132.6"/>
<path d="M215 557.3L690 139.3"/>
<path d="M215 564.0L690 146.0"/>
<path d="M215 570.7L690 152.7"/>
<path d="M215 577.4L690 159.4"/>
<path d="M215 584.1L690 166.1"/>
<path d="M215 590.8L690 172.8"/>
<path d="M215 597.5L690 179.5"/>
<path d="M215 604.2L690 186.2"/>
<path d="M215 610.9L690 192.9"/>
<path d="M215 617.6L690 199.6"/>
<path d="M215 624.3L690 206.3"/>
<path d="M215 631.0L690 213.0"/>
<path d="M215 637.7L690 219.7"/>
<path d="M215 644.4L690 226.4"/>
<path d="M215 651.1L690 233.1"/>
<path d="M215 657.8L690 239.8"/>
<path d="M215 664.5L690 246.5"/>
<path d="M215 671.2L690 253.2"/>
<path d="M215 677.9L690 259.9"/>
<path d="M215 684.6L690 266.6"/>
<path d="M215 691.3L690 273.3"/>
<path d="M215 698.0L690 280.0"/>
<path d="M215 704.7L690 286.7"/>
<path d="M215 711.4L690 293.4"/>
<path d="M215 718.1L690 300.1"/>
<path d="M215 724.8L690 306.8"/>
<path d="M215 731.5L690 313.5"/>
<path d="M215 738.2L690 320.2"/>
<path d="M215 744.9L690 326.9"/>
<path d="M215 751.6L690 333.6"/>
<path d="M215 758.3L690 340.3"/>
<path d="M215 765.0L690 347.0"/>
<path d="M215 771.7L690 353.7"/>
<path d="M215 778.4L690 360.4"/>
<path d="M215 785.1L690 367.1"/>
<path d="M215 791.8L690 373.8"/>
<path d="M215 798.5L690 380.5"/>
<path d="M215 805.2L690 387.2"/>
<path d="M215 811.9L690 393.9"/>
<path d="M215 818.6L690 400.6"/>
<path d="M215 825.3L690 407.3"/>
<path d="M215 832.0L690 414.0"/>
<path d="M215 838.7L690 420.7"/>
<path d="M215 845.4L690 427.4"/>
<path d="M215 852.1L690 434.1"/>
<path d="M215 858.8L690 440.8"/>
<path d="M215 865.5L690 447.5"/>
<path d="M215 872.2L690 454.2"/>
<path d="M215 878.9L690 460.9"/>
<path d="M215 885.6L690 467.6"/>
<path d="M215 892.3L690 474.3"/>
<path d="M215 899.0L690 481.0"/>
<path d="M215 905.7L690 487.7"/>
<path d="M215 912.4L690 494.4"/>
<path d="M215 919.1L690 501.1"/>
<path d="M215 925.8L690 507.8"/>
<path d="M215 932.5L690 514.5"/>
<path d="M215 939.2L690 521.2"/>
<path d="M215 945.9L690 527.9"/>
<path d="M215 952.6L690 534.6"/>
<path d="M215 959.3L690 541.3"/>
<path d="M215 966.0L690 548.0"/>
<path d="M215 972.7L690 554.7"/>
<path d="M215 979.4L690 561.4"/>
<path d="M215 986.1L690 568.1"/>
<path d="M215 992.8L690 574.8"/>
<path d="M215 999.5L690 581.5"/>
<path d="M215 1006.2L690 588.2"/>
<path d="M215 1012.9L690 594.9"/>
<path d="M215 1019.6L690 601.6"/>
<path d="M215 1026.3L690 608.3"/>
<path d="M215 1033.0L690 615.0"/>
<path d="M215 1039.7L690 621.7"/>
<path d="M215 1046.4L690 628.4"/>
<path d="M215 1053.1L690 635.1"/>
<path d="M215 1059.8L690 641.8"/>
<path d="M215 1066.5L690 648.5"/>
</g>
<g id="tk" fill="none" stroke="currentColor" stroke-linejoin="round" stroke-linecap="round">
<path d="M310.5 215.4 L271.0 215.4 L263.8 223.5 L263.8 240.8 L260.8 247.9 L265.8 253.0 L265.8 293.5 L284.0 315.0 L284.0 335.5 L279.0 341.6 L264.8 346.7 L258.7 354.8 L258.7 389.0 L277.0 410.3 L303.4 410.3" stroke-width="4.8"/>
<path d="M277.0 411.0 L267.0 415.4 L257.7 426.5 L244.5 426.5 L229.3 440.8 L229.3 539.0 L253.7 565.8 L643.3 565.8 L649.2 561.4 L649.2 545.0 L643.3 537.8 L643.3 452.0 L650.7 443.0 L650.7 431.4" stroke-width="4.8"/>
<path d="M300.0 199.0 L317.0 175.0 L317.0 147.0 L322.0 142.0 L491.0 142.0 L501.0 135.4 L518.0 135.4 L527.0 140.5 L539.5 140.5 L566.0 167.0 L566.0 179.0 L573.0 187.0 L604.0 187.0 L617.0 195.0 L625.0 210.0 L625.0 228.0 L616.0 246.0 L615.0 318.0" stroke-width="4.8"/>
<path d="M499.0 143.0 L517.0 143.0 L545.6 171.0 L545.6 180.0 L554.0 190.0 L580.0 200.0 L587.0 211.0 L587.0 220.0 L599.0 239.0 L601.0 250.0 L601.0 365.0 L595.0 373.0 L579.0 373.0 L579.0 389.0" stroke-width="4.8"/>
<path d="M507.0 152.0 L564.5 204.5 L564.5 223.0 L592.0 241.0 L592.0 290.0 L590.0 296.0" stroke-width="4.8"/>
<path d="M484.5 159.0 L546.0 211.0 L546.0 227.0 L555.0 234.0 L576.0 255.0 L576.0 300.0 L579.6 306.0 L579.6 330.0" stroke-width="4.8"/>
<path d="M463.0 153.0 L470.0 160.0 L470.0 172.0 L452.0 188.0 L452.0 208.0" stroke-width="4.8"/>
<path d="M505.0 168.0 L514.0 178.0 L514.0 216.0" stroke-width="4.8"/>
<path d="M530.0 196.0 L530.0 216.0" stroke-width="3.6"/>
<path d="M567.0 204.5 L608.0 204.5 L608.0 218.0 L604.0 224.0" stroke-width="4.8"/>
<path d="M613.0 290.0 L613.0 318.0" stroke-width="4.8"/>
<path d="M452.0 196.0 L452.0 210.0" stroke-width="4.0"/>
<path d="M432.0 199.0 L432.0 206.0" stroke-width="3.6"/>
</g>
<g id="tn" fill="none" stroke="currentColor" stroke-width="1.150">
<path d="M296.0 262.0 L296.0 290.0 L310.0 306.0 L310.0 330.0 L300.0 343.0 L300.0 392.0 L306.0 400.0"/>
<path d="M276.0 226.0 L276.0 240.0 L272.0 248.0 L277.0 254.0 L277.0 290.0 L295.0 312.0 L295.0 338.0 L288.0 346.0 L274.0 351.0 L270.0 358.0 L270.0 386.0 L283.0 400.0 L283.0 400.0"/>
<path d="M279.3 226.0 L279.3 240.0 L275.3 248.0 L280.3 252.0 L280.3 288.0 L298.3 310.0 L298.3 336.0 L291.3 344.0 L277.3 349.0 L273.3 356.0 L273.3 384.0 L286.3 398.0 L286.3 401.0"/>
<path d="M282.6 226.0 L282.6 240.0 L278.6 248.0 L283.6 250.0 L283.6 286.0 L301.6 308.0 L301.6 334.0 L294.6 342.0 L280.6 347.0 L276.6 354.0 L276.6 382.0 L289.6 396.0 L289.6 402.0"/>
<path d="M285.9 226.0 L285.9 240.0 L281.9 248.0 L286.9 248.1 L286.9 284.1 L304.9 306.1 L304.9 332.1 L297.9 340.1 L283.9 345.1 L279.9 352.1 L279.9 380.1 L292.9 394.1 L292.9 403.0"/>
<path d="M289.2 226.0 L289.2 240.0 L285.2 248.0 L290.2 246.1 L290.2 282.1 L308.2 304.1 L308.2 330.1 L301.2 338.1 L287.2 343.1 L283.2 350.1 L283.2 378.1 L296.2 392.1 L296.2 404.0"/>
<path d="M292.5 226.0 L292.5 240.0 L288.5 248.0 L293.5 244.1 L293.5 280.1 L311.5 302.1 L311.5 328.1 L304.5 336.1 L290.5 341.1 L286.5 348.1 L286.5 376.1 L299.5 390.1 L299.5 404.9"/>
<path d="M318.0 300.0 L318.0 360.0 L326.0 372.0 L326.0 400.0"/>
<path d="M321.2 300.0 L321.2 360.0 L329.2 372.0 L329.2 400.0"/>
<path d="M324.4 300.0 L324.4 360.0 L332.4 372.0 L332.4 400.0"/>
<path d="M327.6 300.0 L327.6 360.0 L335.6 372.0 L335.6 400.0"/>
<path d="M286.0 248.0 L330.0 248.0"/>
<path d="M292.0 258.0 L334.0 258.0 L340.0 252.0 L372.0 252.0"/>
<path d="M300.0 268.0 L340.0 268.0 L350.0 258.0 L380.0 258.0"/>
<path d="M300.0 271.2 L340.0 271.2 L350.0 261.2 L380.0 261.2"/>
<path d="M300.0 274.4 L340.0 274.4 L350.0 264.4 L380.0 264.4"/>
<path d="M392.0 205.0 L392.0 330.0 L386.0 340.0 L386.0 400.0 L394.0 412.0 L394.0 470.0 L388.0 480.0 L388.0 520.0"/>
<path d="M397.0 212.0 L397.0 332.0 L391.0 342.0 L391.0 398.0 L399.0 410.0 L399.0 472.0 L393.0 482.0 L393.0 530.0"/>
<path d="M402.0 205.0 L402.0 520.0"/>
<path d="M406.0 205.0 L406.0 520.0"/>
<path d="M410.0 205.0 L410.0 520.0"/>
<path d="M372.0 205.0 L372.0 238.0 L378.0 246.0 L378.0 300.0"/>
<path d="M375.5 205.0 L375.5 238.0 L381.5 246.0 L381.5 300.0"/>
<path d="M379.0 205.0 L379.0 238.0 L385.0 246.0 L385.0 300.0"/>
<path d="M352.0 238.0 L368.0 238.0 L376.0 230.0 L400.0 230.0 L408.0 222.0 L430.0 222.0"/>
<path d="M352.0 241.2 L368.0 241.2 L376.0 233.2 L400.0 233.2 L408.0 225.2 L430.0 225.2"/>
<path d="M352.0 244.4 L368.0 244.4 L376.0 236.4 L400.0 236.4 L408.0 228.4 L430.0 228.4"/>
<path d="M352.0 247.6 L368.0 247.6 L376.0 239.6 L400.0 239.6 L408.0 231.6 L430.0 231.6"/>
<path d="M249.0 426.0 L249.0 455.0 L257.0 462.0 L360.0 462.0 L378.0 480.0 L378.0 520.0 L372.0 528.0 L372.0 548.0"/>
<path d="M281.0 443.0 L286.0 436.0 L300.0 436.0 L306.0 442.0 L330.0 442.0 L345.0 456.0 L354.0 456.0"/>
<path d="M290.0 430.0 L296.0 424.0 L306.0 424.0"/>
<path d="M330.5 157.0 L330.5 215.0"/>
<path d="M333.5 157.0 L333.5 215.0"/>
<path d="M372.0 170.0 L372.0 205.0"/>
<path d="M377.0 170.0 L377.0 205.0"/>
<path d="M381.0 170.0 L381.0 205.0"/>
<path d="M384.0 170.0 L384.0 205.0"/>
<path d="M384.0 187.0 L401.5 171.0"/>
<path d="M388.0 190.0 L405.0 174.0 L412.0 174.0"/>
<path d="M340.0 150.0 L340.0 163.0"/>
<path d="M348.0 150.0 L351.0 163.0"/>
<path d="M356.0 150.0 L356.0 163.0"/>
<path d="M365.0 150.0 L365.0 163.0"/>
<path d="M390.0 150.0 L393.0 163.0"/>
<path d="M398.0 150.0 L401.0 163.0"/>
<path d="M407.0 150.0 L404.0 163.0"/>
<path d="M415.0 150.0 L412.0 163.0"/>
<path d="M424.0 150.0 L427.0 163.0"/>
<path d="M432.0 150.0 L432.0 163.0"/>
<path d="M441.0 150.0 L444.0 163.0"/>
<path d="M449.0 150.0 L452.0 163.0"/>
<path d="M458.0 150.0 L455.0 163.0"/>
<path d="M466.0 150.0 L463.0 163.0"/>
<path d="M475.0 150.0 L475.0 163.0"/>
<path d="M420.0 172.0 L420.0 184.0 L410.0 196.0"/>
<path d="M436.0 172.0 L436.0 190.0 L445.0 198.0"/>
<path d="M469.0 172.0 L469.0 192.0"/>
<rect x="230.5" y="262.5" width="34.0" height="100.0"/>
<rect x="248.5" y="198.5" width="24.0" height="60.0"/>
<rect x="500.5" y="250.5" width="60.0" height="40.0"/>
<rect x="503.5" y="411.0" width="35.0" height="41.0" rx="4"/>
<rect x="541.0" y="499.0" width="32.0" height="48.0" rx="4"/>
<rect x="532.0" y="493.0" width="52.0" height="58.0" rx="2"/>
<rect x="458.4" y="449.7" width="28.6" height="39.3" rx="2"/>
<rect x="436.0" y="404.0" width="40.0" height="30.0" rx="3"/>
<path d="M382.0 260.7 L600.0 260.7"/>
<path d="M450.0 260.7 L450.0 310.0"/>
<path d="M445.0 343.7 L600.0 343.7"/>
<path d="M450.0 343.7 L450.0 377.0"/>
<path d="M366.0 377.0 L528.0 377.0 L528.0 392.5"/>
<path d="M487.6 386.0 L487.6 537.0"/>
<path d="M487.6 387.0 L515.0 387.0 L515.0 392.5 L528.0 392.5"/>
<path d="M536.5 490.0 L600.0 490.0"/>
<path d="M408.6 529.7 L487.4 529.7"/>
<path d="M381.0 538.9 L408.6 538.9 L408.6 529.7"/>
<path d="M381.0 538.9 L381.0 551.0"/>
<path d="M230.0 551.0 L600.0 551.0"/>
<path d="M375.0 470.0 L375.0 508.4"/>
<path d="M581.0 375.5 L581.0 460.5"/>
<path d="M587.4 380.0 L587.4 455.0"/>
<path d="M558.6 367.0 L558.6 403.0"/>
<path d="M558.6 403.0 L581.0 403.0"/>
<path d="M366.0 377.0 L366.0 470.0"/>
<path d="M366.0 430.0 L345.0 430.0"/>
<path d="M509.0 298.0 L509.0 343.7"/>
<path d="M540.0 298.0 L540.0 343.7"/>
<path d="M509.0 298.0 L575.0 298.0"/>
<path d="M560.0 262.0 L560.0 298.0"/>
<path d="M482.0 262.0 L482.0 296.0 L509.0 296.0"/>
<path d="M222.5 351.0 L258.0 351.0"/>
<path d="M240.0 262.0 L240.0 351.0"/>
<path d="M222.5 262.0 L264.0 262.0"/>
<path d="M300.0 205.0 L300.0 215.0"/>
<path d="M340.0 205.0 L340.0 246.0"/>
<path d="M575.0 330.0 L575.0 372.0"/>
<path d="M520.0 343.7 L520.0 377.0"/>
<path d="M545.0 343.7 L545.0 377.0"/>
<path d="M560.0 420.0 L600.0 420.0"/>
<path d="M560.0 420.0 L560.0 460.0"/>
<path d="M520.0 460.0 L600.0 460.0"/>
<circle cx="251.6" cy="158.7" r="12.7"/>
<circle cx="287.0" cy="158.7" r="7.6"/>
<circle cx="650.4" cy="158.7" r="13.0"/>
<circle cx="612.8" cy="158.7" r="8.0"/>
<circle cx="233.4" cy="209.3" r="11.0"/>
<circle cx="232.3" cy="559.0" r="10.0"/>
<circle cx="668.0" cy="558.0" r="8.0"/>
<polygon points="232.0,123.5 667.5,123.5 681.0,133.0 681.0,566.0 670.5,575.5 232.0,575.5 221.5,566.0 221.5,133.0"/>
<path d="M264.0 172.0 L264.0 198.0"/>
<path d="M264.0 172.0 L300.0 172.0"/>
<path d="M281.0 172.0 L281.0 198.0"/>
<path d="M300.0 123.5 L300.0 190.0"/>
<path d="M334.0 123.5 L334.0 137.4"/>
<path d="M334.0 137.4 L492.0 137.4"/>
<path d="M232.0 137.0 L300.0 137.0"/>
<path d="M567.0 140.0 L590.0 140.0 L610.0 160.0"/>
<path d="M567.0 140.0 L567.0 186.0"/>
<path d="M620.0 166.0 L640.0 188.0 L640.0 205.0 L665.0 235.0 L665.0 300.0 L660.0 310.0 L660.0 420.0"/>
<path d="M640.0 196.0 L681.0 196.0"/>
<path d="M621.0 265.0 L665.0 265.0"/>
<path d="M621.0 246.0 L621.0 420.0"/>
<path d="M621.0 420.0 L665.0 420.0"/>
<path d="M650.0 330.0 L675.0 330.0 L675.0 400.0"/>
<path d="M650.0 330.0 L650.0 398.0"/>
<path d="M600.0 401.8 L677.0 401.8"/>
<path d="M638.9 401.8 L638.9 456.5"/>
<path d="M600.0 456.5 L638.9 456.5"/>
<path d="M647.7 515.6 L678.0 515.6"/>
<path d="M678.8 140.0 L678.8 560.0"/>
<path d="M606.0 456.5 L606.0 556.0"/>
</g>
<g id="pl" fill="none" stroke="currentColor" stroke-width="1.150">
<rect x="411.5" y="198.3" width="6.500" height="11.500" rx="3.200"/>
<rect x="434.8" y="198.3" width="6.500" height="11.500" rx="3.200"/>
<rect x="448.8" y="198.3" width="6.500" height="11.500" rx="3.200"/>
<rect x="472.4" y="198.3" width="6.500" height="11.500" rx="3.200"/>
<rect x="486.6" y="198.3" width="6.500" height="11.500" rx="3.200"/>
<rect x="506.8" y="198.3" width="6.500" height="11.500" rx="3.200"/>
<rect x="411.5" y="223.3" width="6.500" height="11.500" rx="3.200"/>
<rect x="434.8" y="223.3" width="6.500" height="11.500" rx="3.200"/>
<rect x="448.8" y="223.3" width="6.500" height="11.500" rx="3.200"/>
<rect x="472.4" y="223.3" width="6.500" height="11.500" rx="3.200"/>
<rect x="486.6" y="223.3" width="6.500" height="11.500" rx="3.200"/>
<rect x="506.8" y="223.3" width="6.500" height="11.500" rx="3.200"/>
<circle cx="389.3" cy="205.0" r="3.200"/>
<circle cx="397.4" cy="205.0" r="3.200"/>
<circle cx="389.3" cy="216.4" r="3.200"/>
<circle cx="397.4" cy="216.4" r="3.200"/>
<circle cx="400.0" cy="253.0" r="3.200"/>
<circle cx="437.0" cy="266.0" r="3.200"/>
<circle cx="474.0" cy="266.0" r="3.200"/>
<circle cx="513.0" cy="262.0" r="3.200"/>
<circle cx="232.0" cy="230.0" r="3.200"/>
<circle cx="232.0" cy="250.0" r="3.200"/>
<circle cx="252.0" cy="218.0" r="3.200"/>
<circle cx="243.0" cy="275.0" r="3.200"/>
<circle cx="232.0" cy="300.0" r="3.200"/>
<circle cx="253.0" cy="300.0" r="3.200"/>
<circle cx="231.0" cy="322.0" r="3.200"/>
<circle cx="298.0" cy="244.0" r="3.200"/>
<circle cx="300.0" cy="232.0" r="3.200"/>
<circle cx="253.0" cy="352.0" r="3.200"/>
<circle cx="247.0" cy="367.0" r="3.200"/>
<circle cx="252.0" cy="405.0" r="3.200"/>
<circle cx="258.0" cy="425.0" r="3.200"/>
<circle cx="342.0" cy="231.0" r="3.200"/>
<circle cx="351.0" cy="219.0" r="3.200"/>
<circle cx="253.0" cy="465.0" r="3.200"/>
<circle cx="259.0" cy="495.0" r="3.200"/>
<circle cx="254.0" cy="548.0" r="3.200"/>
<circle cx="247.0" cy="467.0" r="3.200"/>
<rect x="468.4" y="470.2" width="22.0" height="7.0" rx="3.500"/>
<rect x="481.2" y="410.9" width="14.0" height="7.0" rx="3.500"/>
<circle cx="487.3" cy="518.3" r="3.2"/>
<circle cx="554.0" cy="372.6" r="2.8"/>
<circle cx="294.0" cy="326.7" r="3.2"/>
<circle cx="477.7" cy="301.5" r="2.8"/>
<rect x="346.7" y="322.8" width="14.0" height="7.0" rx="3.500"/>
<rect x="371.4" y="532.0" width="13.0" height="6.5" rx="3.200"/>
<circle cx="583.4" cy="373.3" r="3.2"/>
<circle cx="340.5" cy="306.8" r="3.2"/>
<rect x="535.2" y="423.6" width="6.5" height="13.0" rx="3.200"/>
<rect x="381.0" y="489.7" width="6.5" height="11.0" rx="3.200"/>
<circle cx="433.7" cy="315.3" r="2.8"/>
<rect x="407.4" y="416.5" width="11.0" height="6.5" rx="3.200"/>
<circle cx="292.8" cy="279.1" r="2.8"/>
<rect x="317.2" y="331.4" width="18.0" height="7.0" rx="3.500"/>
<rect x="391.4" y="359.8" width="6.5" height="11.0" rx="3.200"/>
<rect x="510.5" y="485.7" width="14.0" height="7.0" rx="3.500"/>
<circle cx="421.6" cy="539.9" r="3.5"/>
<circle cx="475.7" cy="523.1" r="3.5"/>
<circle cx="455.7" cy="353.5" r="2.8"/>
<rect x="527.3" y="438.3" width="11.0" height="6.5" rx="3.200"/>
<rect x="328.1" y="276.1" width="22.0" height="7.0" rx="3.500"/>
<rect x="565.3" y="271.7" width="11.0" height="6.5" rx="3.200"/>
<circle cx="428.5" cy="384.1" r="3.5"/>
<rect x="292.9" y="400.7" width="14.0" height="7.0" rx="3.500"/>
<circle cx="588.3" cy="423.9" r="3.2"/>
<circle cx="322.4" cy="387.7" r="3.2"/>
<rect x="372.6" y="389.4" width="14.0" height="7.0" rx="3.500"/>
<rect x="583.5" y="386.5" width="6.5" height="13.0" rx="3.200"/>
<rect x="553.2" y="294.0" width="22.0" height="7.0" rx="3.500"/>
<rect x="578.5" y="436.1" width="6.5" height="11.0" rx="3.200"/>
<rect x="433.0" y="407.0" width="13.0" height="6.5" rx="3.200"/>
<rect x="525.7" y="476.5" width="6.5" height="13.0" rx="3.200"/>
<rect x="379.7" y="417.1" width="6.5" height="11.0" rx="3.200"/>
<rect x="579.2" y="463.0" width="18.0" height="7.0" rx="3.500"/>
<circle cx="487.5" cy="428.6" r="3.5"/>
<circle cx="525.2" cy="357.3" r="3.2"/>
<rect x="530.8" y="360.5" width="22.0" height="7.0" rx="3.500"/>
<circle cx="426.7" cy="368.0" r="2.8"/>
<rect x="441.9" y="309.0" width="18.0" height="7.0" rx="3.500"/>
<rect x="372.7" y="282.6" width="6.5" height="11.0" rx="3.200"/>
<rect x="524.0" y="423.1" width="6.5" height="11.0" rx="3.200"/>
<circle cx="458.2" cy="508.8" r="2.8"/>
<rect x="501.4" y="538.7" width="14.0" height="7.0" rx="3.500"/>
<circle cx="306.5" cy="303.4" r="2.8"/>
<rect x="431.2" y="416.3" width="11.0" height="6.5" rx="3.200"/>
<circle cx="476.0" cy="431.2" r="3.2"/>
<circle cx="290.2" cy="379.5" r="3.2"/>
<rect x="548.9" y="455.6" width="9.0" height="6.5" rx="3.200"/>
<rect x="378.4" y="342.2" width="6.5" height="13.0" rx="3.200"/>
<rect x="390.4" y="298.9" width="13.0" height="6.5" rx="3.200"/>
<rect x="575.5" y="533.8" width="11.0" height="6.5" rx="3.200"/>
<circle cx="491.1" cy="372.9" r="3.5"/>
<rect x="552.0" y="420.8" width="9.0" height="6.5" rx="3.200"/>
<circle cx="435.8" cy="464.3" r="2.8"/>
<rect x="462.1" y="335.3" width="18.0" height="7.0" rx="3.500"/>
<rect x="357.3" y="268.0" width="18.0" height="7.0" rx="3.500"/>
<rect x="435.0" y="342.9" width="9.0" height="6.5" rx="3.200"/>
<circle cx="582.1" cy="334.7" r="2.8"/>
<rect x="538.1" y="264.2" width="6.5" height="11.0" rx="3.200"/>
<rect x="429.7" y="273.0" width="9.0" height="6.5" rx="3.200"/>
<rect x="365.9" y="400.3" width="22.0" height="7.0" rx="3.500"/>
<rect x="507.0" y="295.6" width="18.0" height="7.0" rx="3.500"/>
<rect x="369.3" y="461.0" width="13.0" height="6.5" rx="3.200"/>
<rect x="296.6" y="333.4" width="9.0" height="6.5" rx="3.200"/>
<rect x="446.9" y="266.6" width="18.0" height="7.0" rx="3.500"/>
<rect x="459.8" y="455.4" width="22.0" height="7.0" rx="3.500"/>
<circle cx="436.5" cy="521.3" r="3.2"/>
<rect x="488.4" y="464.0" width="18.0" height="7.0" rx="3.500"/>
<rect x="531.3" y="281.0" width="22.0" height="7.0" rx="3.500"/>
<circle cx="487.1" cy="398.3" r="2.8"/>
<circle cx="441.3" cy="358.6" r="3.5"/>
<rect x="449.1" y="276.3" width="11.0" height="6.5" rx="3.200"/>
<circle cx="530.7" cy="451.8" r="3.5"/>
<rect x="417.3" y="279.7" width="6.5" height="11.0" rx="3.200"/>
<rect x="541.5" y="324.1" width="9.0" height="6.5" rx="3.200"/>
<rect x="323.9" y="344.4" width="14.0" height="7.0" rx="3.500"/>
<rect x="351.5" y="415.0" width="6.5" height="13.0" rx="3.200"/>
<rect x="304.2" y="420.6" width="6.5" height="13.0" rx="3.200"/>
<rect x="415.7" y="350.8" width="11.0" height="6.5" rx="3.200"/>
<circle cx="457.2" cy="327.8" r="2.8"/>
<rect x="362.8" y="472.9" width="9.0" height="6.5" rx="3.200"/>
<circle cx="552.5" cy="392.9" r="2.8"/>
<circle cx="506.8" cy="449.4" r="3.5"/>
<rect x="319.5" y="409.1" width="6.5" height="11.0" rx="3.200"/>
<rect x="346.8" y="295.0" width="22.0" height="7.0" rx="3.500"/>
<rect x="433.9" y="322.0" width="11.0" height="6.5" rx="3.200"/>
<rect x="355.9" y="356.1" width="11.0" height="6.5" rx="3.200"/>
<circle cx="405.0" cy="468.4" r="3.2"/>
<rect x="523.6" y="383.9" width="22.0" height="7.0" rx="3.500"/>
<rect x="338.5" y="399.7" width="22.0" height="7.0" rx="3.500"/>
<rect x="514.6" y="262.9" width="13.0" height="6.5" rx="3.200"/>
<rect x="550.9" y="502.8" width="6.5" height="13.0" rx="3.200"/>
<circle cx="374.3" cy="311.2" r="2.8"/>
<rect x="304.7" y="267.6" width="6.5" height="9.0" rx="3.200"/>
<rect x="486.7" y="344.3" width="13.0" height="6.5" rx="3.200"/>
<rect x="478.6" y="435.4" width="22.0" height="7.0" rx="3.500"/>
<rect x="397.5" y="347.8" width="6.5" height="11.0" rx="3.200"/>
<circle cx="525.9" cy="315.2" r="2.8"/>
<rect x="479.3" y="383.1" width="14.0" height="7.0" rx="3.500"/>
<circle cx="497.1" cy="313.5" r="3.5"/>
<rect x="457.3" y="525.8" width="9.0" height="6.5" rx="3.200"/>
<circle cx="305.3" cy="377.2" r="3.2"/>
<rect x="572.3" y="317.2" width="13.0" height="6.5" rx="3.200"/>
<circle cx="451.5" cy="289.6" r="2.8"/>
<rect x="414.1" y="477.8" width="9.0" height="6.5" rx="3.200"/>
<rect x="563.1" y="348.9" width="9.0" height="6.5" rx="3.200"/>
<rect x="323.2" y="397.8" width="18.0" height="7.0" rx="3.500"/>
<circle cx="539.1" cy="353.6" r="2.8"/>
<rect x="529.6" y="531.5" width="6.5" height="11.0" rx="3.200"/>
<circle cx="503.0" cy="279.4" r="3.2"/>
<rect x="409.0" y="292.3" width="22.0" height="7.0" rx="3.500"/>
<rect x="318.6" y="362.5" width="22.0" height="7.0" rx="3.500"/>
<circle cx="295.1" cy="413.7" r="2.8"/>
<rect x="385.9" y="266.2" width="9.0" height="6.5" rx="3.200"/>
<circle cx="575.3" cy="488.5" r="3.2"/>
<rect x="421.0" y="326.7" width="9.0" height="6.5" rx="3.200"/>
<rect x="456.4" y="397.5" width="18.0" height="7.0" rx="3.500"/>
<rect x="437.8" y="476.6" width="18.0" height="7.0" rx="3.500"/>
<rect x="389.9" y="332.0" width="14.0" height="7.0" rx="3.500"/>
<circle cx="301.5" cy="313.5" r="3.5"/>
<rect x="366.6" y="520.3" width="18.0" height="7.0" rx="3.500"/>
<rect x="430.6" y="394.4" width="9.0" height="6.5" rx="3.200"/>
<rect x="397.9" y="265.6" width="13.0" height="6.5" rx="3.200"/>
<rect x="449.4" y="456.1" width="13.0" height="6.5" rx="3.200"/>
<circle cx="453.2" cy="489.6" r="3.5"/>
<rect x="549.1" y="525.0" width="6.5" height="9.0" rx="3.200"/>
<rect x="510.0" y="450.1" width="18.0" height="7.0" rx="3.500"/>
<rect x="492.6" y="497.5" width="13.0" height="6.5" rx="3.200"/>
<circle cx="436.9" cy="291.7" r="3.2"/>
<rect x="404.1" y="312.6" width="9.0" height="6.5" rx="3.200"/>
<circle cx="476.5" cy="374.3" r="3.5"/>
<circle cx="456.0" cy="380.0" r="3.2"/>
<circle cx="450.7" cy="519.3" r="3.2"/>
<rect x="395.8" y="515.0" width="22.0" height="7.0" rx="3.500"/>
<circle cx="320.6" cy="320.2" r="2.8"/>
<rect x="377.5" y="310.9" width="22.0" height="7.0" rx="3.500"/>
<rect x="513.7" y="331.3" width="18.0" height="7.0" rx="3.500"/>
<rect x="374.5" y="295.5" width="11.0" height="6.5" rx="3.200"/>
<circle cx="349.4" cy="362.2" r="3.2"/>
<circle cx="414.1" cy="530.1" r="3.2"/>
<rect x="429.7" y="538.4" width="11.0" height="6.5" rx="3.200"/>
<circle cx="364.5" cy="392.7" r="2.8"/>
<rect x="546.8" y="493.7" width="18.0" height="7.0" rx="3.500"/>
<circle cx="402.3" cy="376.2" r="2.8"/>
<circle cx="492.6" cy="300.5" r="3.2"/>
<rect x="310.2" y="363.7" width="6.5" height="9.0" rx="3.200"/>
<rect x="411.4" y="337.2" width="18.0" height="7.0" rx="3.500"/>
<circle cx="391.6" cy="326.1" r="3.5"/>
<circle cx="322.2" cy="377.8" r="3.2"/>
<rect x="445.5" y="386.6" width="22.0" height="7.0" rx="3.500"/>
<rect x="351.5" y="456.3" width="22.0" height="7.0" rx="3.500"/>
<rect x="497.8" y="524.9" width="18.0" height="7.0" rx="3.500"/>
<rect x="570.0" y="281.2" width="6.5" height="13.0" rx="3.200"/>
<rect x="287.9" y="419.6" width="6.5" height="9.0" rx="3.200"/>
<rect x="370.6" y="479.9" width="6.5" height="11.0" rx="3.200"/>
<rect x="463.0" y="507.6" width="14.0" height="7.0" rx="3.500"/>
<rect x="497.6" y="430.6" width="6.5" height="13.0" rx="3.200"/>
<rect x="469.1" y="324.5" width="14.0" height="7.0" rx="3.500"/>
<rect x="464.4" y="274.7" width="11.0" height="6.5" rx="3.200"/>
<circle cx="311.1" cy="446.1" r="3.2"/>
<circle cx="368.6" cy="349.6" r="3.2"/>
<rect x="348.8" y="336.2" width="14.0" height="7.0" rx="3.500"/>
<circle cx="442.8" cy="532.3" r="2.8"/>
<circle cx="528.4" cy="500.1" r="2.8"/>
<rect x="338.6" y="381.6" width="22.0" height="7.0" rx="3.500"/>
<rect x="365.9" y="439.0" width="9.0" height="6.5" rx="3.200"/>
<rect x="314.6" y="289.4" width="18.0" height="7.0" rx="3.500"/>
<circle cx="369.2" cy="380.3" r="2.8"/>
<rect x="389.2" y="541.2" width="6.5" height="9.0" rx="3.200"/>
<circle cx="562.5" cy="407.8" r="3.2"/>
<rect x="569.0" y="414.3" width="13.0" height="6.5" rx="3.200"/>
<rect x="453.0" y="535.2" width="9.0" height="6.5" rx="3.200"/>
<rect x="583.8" y="300.2" width="9.0" height="6.5" rx="3.200"/>
<rect x="334.5" y="287.9" width="13.0" height="6.5" rx="3.200"/>
<rect x="490.3" y="487.3" width="11.0" height="6.5" rx="3.200"/>
<rect x="463.4" y="441.7" width="13.0" height="6.5" rx="3.200"/>
<rect x="368.7" y="356.0" width="14.0" height="7.0" rx="3.500"/>
<circle cx="402.6" cy="482.5" r="2.8"/>
</g>
<mask id="mH" maskUnits="userSpaceOnUse" x="215" y="115" width="480" height="470"><rect x="215" y="115" width="480" height="470" fill="#fff"/><g fill="#000" stroke="#000" stroke-width="1.500">
<rect x="411.5" y="198.3" width="6.500" height="11.500" rx="3.200"/>
<rect x="434.8" y="198.3" width="6.500" height="11.500" rx="3.200"/>
<rect x="448.8" y="198.3" width="6.500" height="11.500" rx="3.200"/>
<rect x="472.4" y="198.3" width="6.500" height="11.500" rx="3.200"/>
<rect x="486.6" y="198.3" width="6.500" height="11.500" rx="3.200"/>
<rect x="506.8" y="198.3" width="6.500" height="11.500" rx="3.200"/>
<rect x="411.5" y="223.3" width="6.500" height="11.500" rx="3.200"/>
<rect x="434.8" y="223.3" width="6.500" height="11.500" rx="3.200"/>
<rect x="448.8" y="223.3" width="6.500" height="11.500" rx="3.200"/>
<rect x="472.4" y="223.3" width="6.500" height="11.500" rx="3.200"/>
<rect x="486.6" y="223.3" width="6.500" height="11.500" rx="3.200"/>
<rect x="506.8" y="223.3" width="6.500" height="11.500" rx="3.200"/>
<circle cx="389.3" cy="205.0" r="3.200"/>
<circle cx="397.4" cy="205.0" r="3.200"/>
<circle cx="389.3" cy="216.4" r="3.200"/>
<circle cx="397.4" cy="216.4" r="3.200"/>
<circle cx="400.0" cy="253.0" r="3.200"/>
<circle cx="437.0" cy="266.0" r="3.200"/>
<circle cx="474.0" cy="266.0" r="3.200"/>
<circle cx="513.0" cy="262.0" r="3.200"/>
<circle cx="232.0" cy="230.0" r="3.200"/>
<circle cx="232.0" cy="250.0" r="3.200"/>
<circle cx="252.0" cy="218.0" r="3.200"/>
<circle cx="243.0" cy="275.0" r="3.200"/>
<circle cx="232.0" cy="300.0" r="3.200"/>
<circle cx="253.0" cy="300.0" r="3.200"/>
<circle cx="231.0" cy="322.0" r="3.200"/>
<circle cx="298.0" cy="244.0" r="3.200"/>
<circle cx="300.0" cy="232.0" r="3.200"/>
<circle cx="253.0" cy="352.0" r="3.200"/>
<circle cx="247.0" cy="367.0" r="3.200"/>
<circle cx="252.0" cy="405.0" r="3.200"/>
<circle cx="258.0" cy="425.0" r="3.200"/>
<circle cx="342.0" cy="231.0" r="3.200"/>
<circle cx="351.0" cy="219.0" r="3.200"/>
<circle cx="253.0" cy="465.0" r="3.200"/>
<circle cx="259.0" cy="495.0" r="3.200"/>
<circle cx="254.0" cy="548.0" r="3.200"/>
<circle cx="247.0" cy="467.0" r="3.200"/>
<rect x="468.4" y="470.2" width="22.0" height="7.0" rx="3.500"/>
<rect x="481.2" y="410.9" width="14.0" height="7.0" rx="3.500"/>
<circle cx="487.3" cy="518.3" r="3.2"/>
<circle cx="554.0" cy="372.6" r="2.8"/>
<circle cx="294.0" cy="326.7" r="3.2"/>
<circle cx="477.7" cy="301.5" r="2.8"/>
<rect x="346.7" y="322.8" width="14.0" height="7.0" rx="3.500"/>
<rect x="371.4" y="532.0" width="13.0" height="6.5" rx="3.200"/>
<circle cx="583.4" cy="373.3" r="3.2"/>
<circle cx="340.5" cy="306.8" r="3.2"/>
<rect x="535.2" y="423.6" width="6.5" height="13.0" rx="3.200"/>
<rect x="381.0" y="489.7" width="6.5" height="11.0" rx="3.200"/>
<circle cx="433.7" cy="315.3" r="2.8"/>
<rect x="407.4" y="416.5" width="11.0" height="6.5" rx="3.200"/>
<circle cx="292.8" cy="279.1" r="2.8"/>
<rect x="317.2" y="331.4" width="18.0" height="7.0" rx="3.500"/>
<rect x="391.4" y="359.8" width="6.5" height="11.0" rx="3.200"/>
<rect x="510.5" y="485.7" width="14.0" height="7.0" rx="3.500"/>
<circle cx="421.6" cy="539.9" r="3.5"/>
<circle cx="475.7" cy="523.1" r="3.5"/>
<circle cx="455.7" cy="353.5" r="2.8"/>
<rect x="527.3" y="438.3" width="11.0" height="6.5" rx="3.200"/>
<rect x="328.1" y="276.1" width="22.0" height="7.0" rx="3.500"/>
<rect x="565.3" y="271.7" width="11.0" height="6.5" rx="3.200"/>
<circle cx="428.5" cy="384.1" r="3.5"/>
<rect x="292.9" y="400.7" width="14.0" height="7.0" rx="3.500"/>
<circle cx="588.3" cy="423.9" r="3.2"/>
<circle cx="322.4" cy="387.7" r="3.2"/>
<rect x="372.6" y="389.4" width="14.0" height="7.0" rx="3.500"/>
<rect x="583.5" y="386.5" width="6.5" height="13.0" rx="3.200"/>
<rect x="553.2" y="294.0" width="22.0" height="7.0" rx="3.500"/>
<rect x="578.5" y="436.1" width="6.5" height="11.0" rx="3.200"/>
<rect x="433.0" y="407.0" width="13.0" height="6.5" rx="3.200"/>
<rect x="525.7" y="476.5" width="6.5" height="13.0" rx="3.200"/>
<rect x="379.7" y="417.1" width="6.5" height="11.0" rx="3.200"/>
<rect x="579.2" y="463.0" width="18.0" height="7.0" rx="3.500"/>
<circle cx="487.5" cy="428.6" r="3.5"/>
<circle cx="525.2" cy="357.3" r="3.2"/>
<rect x="530.8" y="360.5" width="22.0" height="7.0" rx="3.500"/>
<circle cx="426.7" cy="368.0" r="2.8"/>
<rect x="441.9" y="309.0" width="18.0" height="7.0" rx="3.500"/>
<rect x="372.7" y="282.6" width="6.5" height="11.0" rx="3.200"/>
<rect x="524.0" y="423.1" width="6.5" height="11.0" rx="3.200"/>
<circle cx="458.2" cy="508.8" r="2.8"/>
<rect x="501.4" y="538.7" width="14.0" height="7.0" rx="3.500"/>
<circle cx="306.5" cy="303.4" r="2.8"/>
<rect x="431.2" y="416.3" width="11.0" height="6.5" rx="3.200"/>
<circle cx="476.0" cy="431.2" r="3.2"/>
<circle cx="290.2" cy="379.5" r="3.2"/>
<rect x="548.9" y="455.6" width="9.0" height="6.5" rx="3.200"/>
<rect x="378.4" y="342.2" width="6.5" height="13.0" rx="3.200"/>
<rect x="390.4" y="298.9" width="13.0" height="6.5" rx="3.200"/>
<rect x="575.5" y="533.8" width="11.0" height="6.5" rx="3.200"/>
<circle cx="491.1" cy="372.9" r="3.5"/>
<rect x="552.0" y="420.8" width="9.0" height="6.5" rx="3.200"/>
<circle cx="435.8" cy="464.3" r="2.8"/>
<rect x="462.1" y="335.3" width="18.0" height="7.0" rx="3.500"/>
<rect x="357.3" y="268.0" width="18.0" height="7.0" rx="3.500"/>
<rect x="435.0" y="342.9" width="9.0" height="6.5" rx="3.200"/>
<circle cx="582.1" cy="334.7" r="2.8"/>
<rect x="538.1" y="264.2" width="6.5" height="11.0" rx="3.200"/>
<rect x="429.7" y="273.0" width="9.0" height="6.5" rx="3.200"/>
<rect x="365.9" y="400.3" width="22.0" height="7.0" rx="3.500"/>
<rect x="507.0" y="295.6" width="18.0" height="7.0" rx="3.500"/>
<rect x="369.3" y="461.0" width="13.0" height="6.5" rx="3.200"/>
<rect x="296.6" y="333.4" width="9.0" height="6.5" rx="3.200"/>
<rect x="446.9" y="266.6" width="18.0" height="7.0" rx="3.500"/>
<rect x="459.8" y="455.4" width="22.0" height="7.0" rx="3.500"/>
<circle cx="436.5" cy="521.3" r="3.2"/>
<rect x="488.4" y="464.0" width="18.0" height="7.0" rx="3.500"/>
<rect x="531.3" y="281.0" width="22.0" height="7.0" rx="3.500"/>
<circle cx="487.1" cy="398.3" r="2.8"/>
<circle cx="441.3" cy="358.6" r="3.5"/>
<rect x="449.1" y="276.3" width="11.0" height="6.5" rx="3.200"/>
<circle cx="530.7" cy="451.8" r="3.5"/>
<rect x="417.3" y="279.7" width="6.5" height="11.0" rx="3.200"/>
<rect x="541.5" y="324.1" width="9.0" height="6.5" rx="3.200"/>
<rect x="323.9" y="344.4" width="14.0" height="7.0" rx="3.500"/>
<rect x="351.5" y="415.0" width="6.5" height="13.0" rx="3.200"/>
<rect x="304.2" y="420.6" width="6.5" height="13.0" rx="3.200"/>
<rect x="415.7" y="350.8" width="11.0" height="6.5" rx="3.200"/>
<circle cx="457.2" cy="327.8" r="2.8"/>
<rect x="362.8" y="472.9" width="9.0" height="6.5" rx="3.200"/>
<circle cx="552.5" cy="392.9" r="2.8"/>
<circle cx="506.8" cy="449.4" r="3.5"/>
<rect x="319.5" y="409.1" width="6.5" height="11.0" rx="3.200"/>
<rect x="346.8" y="295.0" width="22.0" height="7.0" rx="3.500"/>
<rect x="433.9" y="322.0" width="11.0" height="6.5" rx="3.200"/>
<rect x="355.9" y="356.1" width="11.0" height="6.5" rx="3.200"/>
<circle cx="405.0" cy="468.4" r="3.2"/>
<rect x="523.6" y="383.9" width="22.0" height="7.0" rx="3.500"/>
<rect x="338.5" y="399.7" width="22.0" height="7.0" rx="3.500"/>
<rect x="514.6" y="262.9" width="13.0" height="6.5" rx="3.200"/>
<rect x="550.9" y="502.8" width="6.5" height="13.0" rx="3.200"/>
<circle cx="374.3" cy="311.2" r="2.8"/>
<rect x="304.7" y="267.6" width="6.5" height="9.0" rx="3.200"/>
<rect x="486.7" y="344.3" width="13.0" height="6.5" rx="3.200"/>
<rect x="478.6" y="435.4" width="22.0" height="7.0" rx="3.500"/>
<rect x="397.5" y="347.8" width="6.5" height="11.0" rx="3.200"/>
<circle cx="525.9" cy="315.2" r="2.8"/>
<rect x="479.3" y="383.1" width="14.0" height="7.0" rx="3.500"/>
<circle cx="497.1" cy="313.5" r="3.5"/>
<rect x="457.3" y="525.8" width="9.0" height="6.5" rx="3.200"/>
<circle cx="305.3" cy="377.2" r="3.2"/>
<rect x="572.3" y="317.2" width="13.0" height="6.5" rx="3.200"/>
<circle cx="451.5" cy="289.6" r="2.8"/>
<rect x="414.1" y="477.8" width="9.0" height="6.5" rx="3.200"/>
<rect x="563.1" y="348.9" width="9.0" height="6.5" rx="3.200"/>
<rect x="323.2" y="397.8" width="18.0" height="7.0" rx="3.500"/>
<circle cx="539.1" cy="353.6" r="2.8"/>
<rect x="529.6" y="531.5" width="6.5" height="11.0" rx="3.200"/>
<circle cx="503.0" cy="279.4" r="3.2"/>
<rect x="409.0" y="292.3" width="22.0" height="7.0" rx="3.500"/>
<rect x="318.6" y="362.5" width="22.0" height="7.0" rx="3.500"/>
<circle cx="295.1" cy="413.7" r="2.8"/>
<rect x="385.9" y="266.2" width="9.0" height="6.5" rx="3.200"/>
<circle cx="575.3" cy="488.5" r="3.2"/>
<rect x="421.0" y="326.7" width="9.0" height="6.5" rx="3.200"/>
<rect x="456.4" y="397.5" width="18.0" height="7.0" rx="3.500"/>
<rect x="437.8" y="476.6" width="18.0" height="7.0" rx="3.500"/>
<rect x="389.9" y="332.0" width="14.0" height="7.0" rx="3.500"/>
<circle cx="301.5" cy="313.5" r="3.5"/>
<rect x="366.6" y="520.3" width="18.0" height="7.0" rx="3.500"/>
<rect x="430.6" y="394.4" width="9.0" height="6.5" rx="3.200"/>
<rect x="397.9" y="265.6" width="13.0" height="6.5" rx="3.200"/>
<rect x="449.4" y="456.1" width="13.0" height="6.5" rx="3.200"/>
<circle cx="453.2" cy="489.6" r="3.5"/>
<rect x="549.1" y="525.0" width="6.5" height="9.0" rx="3.200"/>
<rect x="510.0" y="450.1" width="18.0" height="7.0" rx="3.500"/>
<rect x="492.6" y="497.5" width="13.0" height="6.5" rx="3.200"/>
<circle cx="436.9" cy="291.7" r="3.2"/>
<rect x="404.1" y="312.6" width="9.0" height="6.5" rx="3.200"/>
<circle cx="476.5" cy="374.3" r="3.5"/>
<circle cx="456.0" cy="380.0" r="3.2"/>
<circle cx="450.7" cy="519.3" r="3.2"/>
<rect x="395.8" y="515.0" width="22.0" height="7.0" rx="3.500"/>
<circle cx="320.6" cy="320.2" r="2.8"/>
<rect x="377.5" y="310.9" width="22.0" height="7.0" rx="3.500"/>
<rect x="513.7" y="331.3" width="18.0" height="7.0" rx="3.500"/>
<rect x="374.5" y="295.5" width="11.0" height="6.5" rx="3.200"/>
<circle cx="349.4" cy="362.2" r="3.2"/>
<circle cx="414.1" cy="530.1" r="3.2"/>
<rect x="429.7" y="538.4" width="11.0" height="6.5" rx="3.200"/>
<circle cx="364.5" cy="392.7" r="2.8"/>
<rect x="546.8" y="493.7" width="18.0" height="7.0" rx="3.500"/>
<circle cx="402.3" cy="376.2" r="2.8"/>
<circle cx="492.6" cy="300.5" r="3.2"/>
<rect x="310.2" y="363.7" width="6.5" height="9.0" rx="3.200"/>
<rect x="411.4" y="337.2" width="18.0" height="7.0" rx="3.500"/>
<circle cx="391.6" cy="326.1" r="3.5"/>
<circle cx="322.2" cy="377.8" r="3.2"/>
<rect x="445.5" y="386.6" width="22.0" height="7.0" rx="3.500"/>
<rect x="351.5" y="456.3" width="22.0" height="7.0" rx="3.500"/>
<rect x="497.8" y="524.9" width="18.0" height="7.0" rx="3.500"/>
<rect x="570.0" y="281.2" width="6.5" height="13.0" rx="3.200"/>
<rect x="287.9" y="419.6" width="6.5" height="9.0" rx="3.200"/>
<rect x="370.6" y="479.9" width="6.5" height="11.0" rx="3.200"/>
<rect x="463.0" y="507.6" width="14.0" height="7.0" rx="3.500"/>
<rect x="497.6" y="430.6" width="6.5" height="13.0" rx="3.200"/>
<rect x="469.1" y="324.5" width="14.0" height="7.0" rx="3.500"/>
<rect x="464.4" y="274.7" width="11.0" height="6.5" rx="3.200"/>
<circle cx="311.1" cy="446.1" r="3.2"/>
<circle cx="368.6" cy="349.6" r="3.2"/>
<rect x="348.8" y="336.2" width="14.0" height="7.0" rx="3.500"/>
<circle cx="442.8" cy="532.3" r="2.8"/>
<circle cx="528.4" cy="500.1" r="2.8"/>
<rect x="338.6" y="381.6" width="22.0" height="7.0" rx="3.500"/>
<rect x="365.9" y="439.0" width="9.0" height="6.5" rx="3.200"/>
<rect x="314.6" y="289.4" width="18.0" height="7.0" rx="3.500"/>
<circle cx="369.2" cy="380.3" r="2.8"/>
<rect x="389.2" y="541.2" width="6.5" height="9.0" rx="3.200"/>
<circle cx="562.5" cy="407.8" r="3.2"/>
<rect x="569.0" y="414.3" width="13.0" height="6.5" rx="3.200"/>
<rect x="453.0" y="535.2" width="9.0" height="6.5" rx="3.200"/>
<rect x="583.8" y="300.2" width="9.0" height="6.5" rx="3.200"/>
<rect x="334.5" y="287.9" width="13.0" height="6.5" rx="3.200"/>
<rect x="490.3" y="487.3" width="11.0" height="6.5" rx="3.200"/>
<rect x="463.4" y="441.7" width="13.0" height="6.5" rx="3.200"/>
<rect x="368.7" y="356.0" width="14.0" height="7.0" rx="3.500"/>
<circle cx="402.6" cy="482.5" r="2.8"/>
<circle cx="233.400" cy="209.300" r="11"/>
</g></mask>
</defs>
<rect x="153" y="97" width="635" height="529" fill="#000"/>
<g clip-path="url(#cB)">
<use href="#hl" style="color:#009600" stroke-width="0.85"/>
<path d="M319 144H494L503 137.500H517L564 168V183H540L500 160V178H385L380 198H330V180H319Z" fill="#000"/>
<rect x="222" y="556.200" width="384" height="2.600" fill="#000"/><rect x="424" y="556.200" width="62" height="7" fill="#000"/><rect x="300" y="556.200" width="40" height="7" fill="#000"/><path d="M246 558.800H606M246 563.200H640" stroke="#0f8a0f" fill="none"/>
<circle cx="251.6" cy="158.7" r="12.7" fill="#000"/>
<circle cx="287.0" cy="158.7" r="7.6" fill="#000"/>
<circle cx="650.4" cy="158.7" r="13.0" fill="#000"/>
<circle cx="612.8" cy="158.7" r="8.0" fill="#000"/>
<circle cx="232.3" cy="559.0" r="10.0" fill="#000"/>
<circle cx="668.0" cy="558.0" r="8.0" fill="#000"/>
<rect x="246" y="569" width="400" height="2.500" fill="#000"/>
</g>
<g clip-path="url(#cH)">
<rect x="222.5" y="198.3" width="378.0" height="357.9" fill="#22fb36"/>
<g filter="url(#b14)"><rect x="400" y="190" width="210" height="120" fill="#0cf060"/><rect x="230" y="440" width="110" height="110" fill="#10f850"/><ellipse cx="300" cy="330" rx="40" ry="40" fill="#50ff30"/><ellipse cx="330" cy="300" rx="25" ry="22" fill="#58ff28"/></g>
<g filter="url(#b14)" fill="#b4ff20" transform="translate(0,9)"><ellipse cx="425" cy="465" rx="70" ry="55"/><ellipse cx="572" cy="507" rx="26" ry="22"/><ellipse cx="395" cy="410" rx="22" ry="20"/><ellipse cx="500" cy="440" rx="40" ry="25"/><ellipse cx="540" cy="400" rx="25" ry="12" opacity=".5"/></g>
<g filter="url(#b8)" fill="#f8f410" transform="translate(0,9)"><ellipse cx="420" cy="460" rx="62" ry="36" transform="rotate(-20 420 460)"/><ellipse cx="393" cy="402" rx="9" ry="9"/><path d="M393 402L412 435" stroke="#f8f410" stroke-width="14"/><rect x="343" y="437" width="40" height="15"/><rect x="338" y="418" width="13" height="58"/><ellipse cx="474" cy="460" rx="20" ry="13"/><rect x="409" y="485" width="17" height="45" transform="rotate(12 417 507)"/><rect x="439" y="478" width="17" height="40"/><rect x="368" y="470" width="18" height="42"/><ellipse cx="568" cy="507" rx="27" ry="15" transform="rotate(32 568 507)"/><ellipse cx="590" cy="521" rx="10" ry="9"/></g>
<g filter="url(#b5)" fill="#ff8a10" transform="translate(0,9)"><ellipse cx="416" cy="456" rx="50" ry="23" transform="rotate(-22 416 456)"/><ellipse cx="392" cy="476" rx="14" ry="13"/><ellipse cx="472" cy="459" rx="11" ry="7"/><rect x="411" y="490" width="13" height="36" transform="rotate(12 417 507)"/><rect x="441" y="482" width="13" height="32"/><rect x="370" y="476" width="13" height="32"/><rect x="346" y="441" width="22" height="8" fill="#ffb010"/></g>
<g filter="url(#b3)" fill="#ee3414" transform="translate(0,9)"><ellipse cx="412" cy="453" rx="36" ry="11" transform="rotate(-24 413 452)"/><ellipse cx="391" cy="470" rx="10" ry="9"/></g>
<use href="#hl" style="color:#007400" stroke-width="0.9" mask="url(#mH)"/>
<use href="#pl" style="color:#089410"/>
<use href="#tn" style="color:#08900e"/>
<use href="#tk" style="color:#12a818"/>
</g>
<g clip-path="url(#cO)">
<use href="#tn" style="color:#0f8a0f"/>
<use href="#tk" style="color:#20a820"/>
</g>
<g fill="#c89a20">
<circle cx="249.6" cy="126.0" r="1.4"/>
<circle cx="249.6" cy="131.5" r="1.4"/>
<circle cx="249.6" cy="572.3" r="1.4"/>
<circle cx="254.6" cy="126.0" r="1.4"/>
<circle cx="254.6" cy="131.5" r="1.4"/>
<circle cx="254.6" cy="572.3" r="1.4"/>
<circle cx="280.6" cy="126.0" r="1.4"/>
<circle cx="280.6" cy="131.5" r="1.4"/>
<circle cx="280.6" cy="572.3" r="1.4"/>
<circle cx="285.6" cy="126.0" r="1.4"/>
<circle cx="285.6" cy="131.5" r="1.4"/>
<circle cx="285.6" cy="572.3" r="1.4"/>
<circle cx="311.6" cy="126.0" r="1.4"/>
<circle cx="311.6" cy="131.5" r="1.4"/>
<circle cx="311.6" cy="572.3" r="1.4"/>
<circle cx="316.6" cy="126.0" r="1.4"/>
<circle cx="316.6" cy="131.5" r="1.4"/>
<circle cx="316.6" cy="572.3" r="1.4"/>
<circle cx="342.6" cy="126.0" r="1.4"/>
<circle cx="342.6" cy="131.5" r="1.4"/>
<circle cx="342.6" cy="572.3" r="1.4"/>
<circle cx="347.6" cy="126.0" r="1.4"/>
<circle cx="347.6" cy="131.5" r="1.4"/>
<circle cx="347.6" cy="572.3" r="1.4"/>
<circle cx="373.6" cy="126.0" r="1.4"/>
<circle cx="373.6" cy="131.5" r="1.4"/>
<circle cx="373.6" cy="572.3" r="1.4"/>
<circle cx="378.6" cy="126.0" r="1.4"/>
<circle cx="378.6" cy="131.5" r="1.4"/>
<circle cx="378.6" cy="572.3" r="1.4"/>
<circle cx="404.6" cy="126.0" r="1.4"/>
<circle cx="404.6" cy="131.5" r="1.4"/>
<circle cx="404.6" cy="572.3" r="1.4"/>
<circle cx="409.6" cy="126.0" r="1.4"/>
<circle cx="409.6" cy="131.5" r="1.4"/>
<circle cx="409.6" cy="572.3" r="1.4"/>
<circle cx="435.6" cy="126.0" r="1.4"/>
<circle cx="435.6" cy="131.5" r="1.4"/>
<circle cx="435.6" cy="572.3" r="1.4"/>
<circle cx="440.6" cy="126.0" r="1.4"/>
<circle cx="440.6" cy="131.5" r="1.4"/>
<circle cx="440.6" cy="572.3" r="1.4"/>
<circle cx="466.6" cy="126.0" r="1.4"/>
<circle cx="466.6" cy="131.5" r="1.4"/>
<circle cx="466.6" cy="572.3" r="1.4"/>
<circle cx="471.6" cy="126.0" r="1.4"/>
<circle cx="471.6" cy="131.5" r="1.4"/>
<circle cx="471.6" cy="572.3" r="1.4"/>
<circle cx="497.6" cy="126.0" r="1.4"/>
<circle cx="497.6" cy="131.5" r="1.4"/>
<circle cx="497.6" cy="572.3" r="1.4"/>
<circle cx="502.6" cy="126.0" r="1.4"/>
<circle cx="502.6" cy="131.5" r="1.4"/>
<circle cx="502.6" cy="572.3" r="1.4"/>
<circle cx="528.6" cy="126.0" r="1.4"/>
<circle cx="528.6" cy="131.5" r="1.4"/>
<circle cx="528.6" cy="572.3" r="1.4"/>
<circle cx="533.6" cy="126.0" r="1.4"/>
<circle cx="533.6" cy="131.5" r="1.4"/>
<circle cx="533.6" cy="572.3" r="1.4"/>
<circle cx="559.6" cy="126.0" r="1.4"/>
<circle cx="559.6" cy="131.5" r="1.4"/>
<circle cx="559.6" cy="572.3" r="1.4"/>
<circle cx="564.6" cy="126.0" r="1.4"/>
<circle cx="564.6" cy="131.5" r="1.4"/>
<circle cx="564.6" cy="572.3" r="1.4"/>
<circle cx="590.6" cy="126.0" r="1.4"/>
<circle cx="590.6" cy="131.5" r="1.4"/>
<circle cx="590.6" cy="572.3" r="1.4"/>
<circle cx="595.6" cy="126.0" r="1.4"/>
<circle cx="595.6" cy="131.5" r="1.4"/>
<circle cx="595.6" cy="572.3" r="1.4"/>
<circle cx="621.6" cy="126.0" r="1.4"/>
<circle cx="621.6" cy="131.5" r="1.4"/>
<circle cx="621.6" cy="572.3" r="1.4"/>
<circle cx="626.6" cy="126.0" r="1.4"/>
<circle cx="626.6" cy="131.5" r="1.4"/>
<circle cx="626.6" cy="572.3" r="1.4"/>
<circle cx="652.6" cy="126.0" r="1.4"/>
<circle cx="652.6" cy="131.5" r="1.4"/>
<circle cx="652.6" cy="572.3" r="1.4"/>
<circle cx="657.6" cy="126.0" r="1.4"/>
<circle cx="657.6" cy="131.5" r="1.4"/>
<circle cx="657.6" cy="572.3" r="1.4"/>
<circle cx="674.0" cy="182.0" r="1.8"/>
<circle cx="677.0" cy="186.0" r="1.8"/>
<circle cx="674.0" cy="213.0" r="1.8"/>
<circle cx="677.0" cy="217.0" r="1.8"/>
<circle cx="674.0" cy="244.0" r="1.8"/>
<circle cx="677.0" cy="248.0" r="1.8"/>
<circle cx="674.0" cy="275.0" r="1.8"/>
<circle cx="677.0" cy="279.0" r="1.8"/>
<circle cx="674.0" cy="306.0" r="1.8"/>
<circle cx="677.0" cy="310.0" r="1.8"/>
<circle cx="674.0" cy="337.0" r="1.8"/>
<circle cx="677.0" cy="341.0" r="1.8"/>
<circle cx="674.0" cy="368.0" r="1.8"/>
<circle cx="677.0" cy="372.0" r="1.8"/>
<circle cx="674.0" cy="399.0" r="1.8"/>
<circle cx="677.0" cy="403.0" r="1.8"/>
<circle cx="674.0" cy="430.0" r="1.8"/>
<circle cx="677.0" cy="434.0" r="1.8"/>
<circle cx="674.0" cy="461.0" r="1.8"/>
<circle cx="677.0" cy="465.0" r="1.8"/>
<circle cx="674.0" cy="492.0" r="1.8"/>
<circle cx="677.0" cy="496.0" r="1.8"/>
<circle cx="674.0" cy="523.0" r="1.8"/>
<circle cx="677.0" cy="527.0" r="1.8"/>
<circle cx="674.0" cy="554.0" r="1.8"/>
<circle cx="677.0" cy="558.0" r="1.8"/>
<circle cx="261.8" cy="560.2" r="2.0"/>
<circle cx="266.7" cy="560.2" r="2.0"/>
<circle cx="271.5" cy="560.2" r="2.0"/>
<circle cx="276.4" cy="560.2" r="2.0"/>
<circle cx="281.3" cy="560.2" r="2.0"/>
<circle cx="286.2" cy="560.2" r="2.0"/>
<circle cx="291.0" cy="560.2" r="2.0"/>
<circle cx="295.9" cy="560.2" r="2.0"/>
<circle cx="300.8" cy="560.2" r="2.0"/>
<circle cx="305.6" cy="560.2" r="2.0"/>
<circle cx="310.5" cy="560.2" r="2.0"/>
<circle cx="231.0" cy="137.0" r="1.8"/>
<circle cx="236.0" cy="137.0" r="1.8"/>
<circle cx="263.0" cy="136.0" r="1.8"/>
<circle cx="268.0" cy="136.0" r="1.8"/>
<circle cx="224.0" cy="150.0" r="1.8"/>
<circle cx="274.0" cy="146.0" r="1.8"/>
<circle cx="274.0" cy="151.0" r="1.8"/>
<circle cx="293.0" cy="141.0" r="1.8"/>
<circle cx="298.0" cy="141.0" r="1.8"/>
<circle cx="293.0" cy="146.0" r="1.8"/>
<circle cx="298.0" cy="146.0" r="1.8"/>
<circle cx="293.0" cy="151.0" r="1.8"/>
<circle cx="233.0" cy="190.0" r="1.8"/>
<circle cx="233.0" cy="194.0" r="1.8"/>
<circle cx="297.0" cy="173.0" r="1.8"/>
<circle cx="297.0" cy="189.0" r="1.8"/>
<circle cx="302.0" cy="197.0" r="1.8"/>
<circle cx="231.0" cy="196.0" r="1.8"/>
<circle cx="236.0" cy="196.0" r="1.8"/>
<circle cx="258.0" cy="197.0" r="1.8"/>
<circle cx="340.0" cy="175.0" r="1.8"/>
<circle cx="345.0" cy="178.0" r="1.8"/>
<circle cx="350.0" cy="175.0" r="1.8"/>
<circle cx="354.0" cy="178.0" r="1.8"/>
<circle cx="339.0" cy="189.0" r="1.8"/>
<circle cx="390.0" cy="193.0" r="1.8"/>
<circle cx="395.0" cy="193.0" r="1.8"/>
<circle cx="422.0" cy="188.0" r="1.8"/>
<circle cx="427.0" cy="193.0" r="1.8"/>
<circle cx="391.0" cy="160.0" r="1.8"/>
<circle cx="417.0" cy="164.0" r="1.8"/>
<circle cx="423.0" cy="173.0" r="1.8"/>
<circle cx="441.0" cy="158.0" r="1.8"/>
<circle cx="466.0" cy="196.0" r="1.8"/>
<circle cx="470.0" cy="196.0" r="1.8"/>
<circle cx="484.0" cy="193.0" r="1.8"/>
<circle cx="488.0" cy="193.0" r="1.8"/>
<circle cx="458.0" cy="193.0" r="1.8"/>
<circle cx="580.0" cy="148.0" r="1.8"/>
<circle cx="585.0" cy="148.0" r="1.8"/>
<circle cx="580.0" cy="153.0" r="1.8"/>
<circle cx="585.0" cy="153.0" r="1.8"/>
<circle cx="540.0" cy="170.0" r="1.8"/>
<circle cx="545.0" cy="170.0" r="1.8"/>
<circle cx="560.0" cy="176.0" r="1.8"/>
<circle cx="560.0" cy="181.0" r="1.8"/>
<circle cx="605.0" cy="137.0" r="1.8"/>
<circle cx="610.0" cy="137.0" r="1.8"/>
<circle cx="637.0" cy="137.0" r="1.8"/>
<circle cx="642.0" cy="137.0" r="1.8"/>
<circle cx="626.0" cy="160.0" r="1.8"/>
<circle cx="626.0" cy="165.0" r="1.8"/>
<circle cx="654.0" cy="187.0" r="1.8"/>
<circle cx="659.0" cy="187.0" r="1.8"/>
<circle cx="654.0" cy="192.0" r="1.8"/>
<circle cx="659.0" cy="192.0" r="1.8"/>
<circle cx="603.0" cy="218.0" r="1.8"/>
<circle cx="607.0" cy="222.0" r="1.8"/>
<circle cx="612.0" cy="218.0" r="1.8"/>
<circle cx="627.0" cy="228.0" r="1.8"/>
<circle cx="632.0" cy="228.0" r="1.8"/>
<circle cx="627.0" cy="234.0" r="1.8"/>
<circle cx="632.0" cy="234.0" r="1.8"/>
<circle cx="607.0" cy="240.0" r="1.8"/>
<circle cx="611.0" cy="244.0" r="1.8"/>
<circle cx="603.0" cy="262.0" r="1.8"/>
<circle cx="612.0" cy="270.0" r="1.8"/>
<circle cx="634.0" cy="316.0" r="1.8"/>
<circle cx="640.0" cy="316.0" r="1.8"/>
<circle cx="627.0" cy="344.0" r="1.8"/>
<circle cx="627.0" cy="368.0" r="1.8"/>
<circle cx="620.0" cy="378.0" r="1.8"/>
<circle cx="626.0" cy="378.0" r="1.8"/>
<circle cx="620.0" cy="383.0" r="1.8"/>
<circle cx="626.0" cy="383.0" r="1.8"/>
<circle cx="626.0" cy="376.0" r="1.8"/>
<circle cx="613.0" cy="386.0" r="1.8"/>
<circle cx="618.0" cy="386.0" r="1.8"/>
<circle cx="613.0" cy="391.0" r="1.8"/>
<circle cx="618.0" cy="391.0" r="1.8"/>
<circle cx="658.0" cy="327.0" r="1.8"/>
<circle cx="664.0" cy="327.0" r="1.8"/>
<circle cx="668.0" cy="327.0" r="1.8"/>
<circle cx="668.0" cy="333.0" r="1.8"/>
<circle cx="668.0" cy="338.0" r="1.8"/>
<circle cx="668.0" cy="343.0" r="1.8"/>
<circle cx="668.0" cy="348.0" r="1.8"/>
<circle cx="668.0" cy="353.0" r="1.8"/>
<circle cx="668.0" cy="367.0" r="1.8"/>
<circle cx="668.0" cy="372.0" r="1.8"/>
<circle cx="668.0" cy="377.0" r="1.8"/>
<circle cx="668.0" cy="383.0" r="1.8"/>
<circle cx="668.0" cy="388.0" r="1.8"/>
<circle cx="668.0" cy="393.0" r="1.8"/>
<circle cx="658.0" cy="397.0" r="1.8"/>
<circle cx="663.0" cy="397.0" r="1.8"/>
<circle cx="610.0" cy="401.0" r="1.8"/>
<circle cx="616.0" cy="405.0" r="1.8"/>
<circle cx="676.0" cy="401.0" r="1.8"/>
<circle cx="607.0" cy="420.0" r="1.8"/>
<circle cx="610.0" cy="440.0" r="1.8"/>
<circle cx="612.0" cy="460.0" r="1.8"/>
<circle cx="615.0" cy="480.0" r="1.8"/>
<circle cx="618.0" cy="495.0" r="1.8"/>
<circle cx="622.0" cy="510.0" r="1.8"/>
<circle cx="630.0" cy="520.0" r="1.8"/>
<circle cx="625.0" cy="540.0" r="1.8"/>
<circle cx="612.0" cy="545.0" r="1.8"/>
<circle cx="607.0" cy="558.0" r="1.8"/>
<circle cx="612.0" cy="558.0" r="1.8"/>
<circle cx="620.0" cy="558.0" r="1.8"/>
<circle cx="639.0" cy="540.0" r="1.8"/>
<circle cx="639.0" cy="545.0" r="1.8"/>
<circle cx="650.0" cy="495.0" r="1.8"/>
<circle cx="650.0" cy="500.0" r="1.8"/>
<circle cx="672.0" cy="494.0" r="1.8"/>
<circle cx="676.0" cy="498.0" r="1.8"/>
<circle cx="672.0" cy="524.0" r="1.8"/>
<circle cx="676.0" cy="528.0" r="1.8"/>
<circle cx="655.0" cy="565.0" r="1.8"/>
<circle cx="650.0" cy="571.0" r="1.8"/>
<circle cx="655.0" cy="571.0" r="1.8"/>
<circle cx="246.0" cy="571.0" r="1.8"/>
<circle cx="251.0" cy="571.0" r="1.8"/>
<circle cx="572.0" cy="562.0" r="1.8"/>
<circle cx="580.0" cy="557.0" r="1.8"/>
<circle cx="602.0" cy="500.0" r="1.8"/>
<circle cx="602.0" cy="510.0" r="1.8"/>
<circle cx="602.0" cy="520.0" r="1.8"/>
<circle cx="602.0" cy="530.0" r="1.8"/>
<circle cx="608.0" cy="470.0" r="1.8"/>
<circle cx="612.0" cy="475.0" r="1.8"/>
<circle cx="617.0" cy="452.0" r="1.8"/>
<circle cx="617.0" cy="458.0" r="1.8"/>
<circle cx="652.0" cy="458.0" r="1.8"/>
<circle cx="652.0" cy="464.0" r="1.8"/>
<circle cx="676.0" cy="430.0" r="1.8"/>
<circle cx="676.0" cy="436.0" r="1.8"/>
</g>
<g fill="none" stroke="#0f8a0f" stroke-width="1">
<circle cx="331.5" cy="158.700" r="4.300"/>
<circle cx="348.3" cy="158.700" r="4.300"/>
<circle cx="365.1" cy="158.700" r="4.300"/>
<circle cx="381.9" cy="158.700" r="4.300"/>
<circle cx="398.7" cy="158.700" r="4.300"/>
<circle cx="415.5" cy="158.700" r="4.300"/>
<circle cx="432.3" cy="158.700" r="4.300"/>
<circle cx="449.1" cy="158.700" r="4.300"/>
<circle cx="465.9" cy="158.700" r="4.300"/>
<circle cx="482.7" cy="158.700" r="4.300"/>
<circle cx="499.5" cy="158.700" r="4.300"/>
<circle cx="323.4" cy="169" r="4.300"/>
<circle cx="340.2" cy="169" r="4.300"/>
<circle cx="357.0" cy="169" r="4.300"/>
<circle cx="373.8" cy="169" r="4.300"/>
<circle cx="390.6" cy="169" r="4.300"/>
<circle cx="407.4" cy="169" r="4.300"/>
<circle cx="424.2" cy="169" r="4.300"/>
<circle cx="441.0" cy="169" r="4.300"/>
<circle cx="457.8" cy="169" r="4.300"/>
<circle cx="474.6" cy="169" r="4.300"/>
<circle cx="491.4" cy="169" r="4.300"/>
<circle cx="508.2" cy="169" r="4.300"/>
</g>
<g fill="#1018d8">
<circle cx="323.4" cy="149" r="2.7"/>
<circle cx="331.8" cy="149" r="2.7"/>
<circle cx="340.2" cy="149" r="2.7"/>
<circle cx="348.6" cy="149" r="2.7"/>
<circle cx="357.0" cy="149" r="2.7"/>
<circle cx="365.4" cy="149" r="2.7"/>
<circle cx="373.8" cy="149" r="2.7"/>
<circle cx="382.2" cy="149" r="2.7"/>
<circle cx="390.6" cy="149" r="2.7"/>
<circle cx="399.0" cy="149" r="2.7"/>
<circle cx="407.4" cy="149" r="2.7"/>
<circle cx="415.8" cy="149" r="2.7"/>
<circle cx="424.2" cy="149" r="2.7"/>
<circle cx="432.6" cy="149" r="2.7"/>
<circle cx="441.0" cy="149" r="2.7"/>
<circle cx="449.4" cy="149" r="2.7"/>
<circle cx="457.8" cy="149" r="2.7"/>
<circle cx="466.2" cy="149" r="2.7"/>
<circle cx="474.6" cy="149" r="2.7"/>
<circle cx="483.0" cy="149" r="2.7"/>
<circle cx="491.4" cy="149" r="2.7"/>
<circle cx="499.8" cy="149" r="2.7"/>
<circle cx="508.2" cy="149" r="2.7"/>
<circle cx="331.5" cy="158.700" r="2.700"/>
<circle cx="348.3" cy="158.700" r="2.700"/>
<circle cx="365.1" cy="158.700" r="2.700"/>
<circle cx="381.9" cy="158.700" r="2.700"/>
<circle cx="398.7" cy="158.700" r="2.700"/>
<circle cx="415.5" cy="158.700" r="2.700"/>
<circle cx="432.3" cy="158.700" r="2.700"/>
<circle cx="449.1" cy="158.700" r="2.700"/>
<circle cx="465.9" cy="158.700" r="2.700"/>
<circle cx="482.7" cy="158.700" r="2.700"/>
<circle cx="499.5" cy="158.700" r="2.700"/>
<circle cx="323.4" cy="169" r="2.7"/>
<circle cx="340.2" cy="169" r="2.7"/>
<circle cx="357.0" cy="169" r="2.7"/>
<circle cx="373.8" cy="169" r="2.7"/>
<circle cx="390.6" cy="169" r="2.7"/>
<circle cx="407.4" cy="169" r="2.7"/>
<circle cx="424.2" cy="169" r="2.7"/>
<circle cx="441.0" cy="169" r="2.7"/>
<circle cx="457.8" cy="169" r="2.7"/>
<circle cx="474.6" cy="169" r="2.7"/>
<circle cx="491.4" cy="169" r="2.7"/>
<circle cx="508.2" cy="169" r="2.7"/>
<circle cx="537.0" cy="148.6" r="3.5"/>
<circle cx="562.0" cy="149.0" r="3.5"/>
<circle cx="549.0" cy="178.0" r="3.5"/>
<circle cx="574.0" cy="178.0" r="3.5"/>
</g>
<g fill="none" stroke="#b89030" stroke-width="1">
<circle cx="251.6" cy="158.7" r="8.0"/>
<path d="M244.6 155.7L254.6 165.7M248.6 151.7L258.6 161.7"/>
<circle cx="650.4" cy="158.7" r="8.6"/>
<path d="M643.4 155.7L653.4 165.7M647.4 151.7L657.4 161.7"/>
<circle cx="287.0" cy="158.7" r="3.5"/>
<circle cx="612.8" cy="158.7" r="3.5"/>
<circle cx="233.4" cy="209.3" r="6.5"/>
<circle cx="232.3" cy="559.0" r="6.0"/>
<circle cx="668.0" cy="558.0" r="5.0"/>
<path d="M229 205l8 8M228 555l8 8M283.500 158.700h7"/>
</g>
<rect x="236" y="539" width="3" height="3" fill="#e01818"/>
<path d="M668 553l4 6h-3v4h-2v-4h-3z" fill="#fff"/>
<polygon points="230.3,120.4 668.6,120.4 683.9,131.3 683.9,567.3 672.0,578.5 230.3,578.5 218.5,567.3 218.5,131.3" fill="none" stroke="#c8c060" stroke-width="1.2"/>
<g fill="#fff">
<rect x="174.1" y="163.3" width="1" height="1.500"/>
<rect x="174.1" y="261.9" width="1" height="1.500"/>
<rect x="174.1" y="360.5" width="1" height="1.500"/>
<rect x="174.1" y="459.1" width="1" height="1.500"/>
<rect x="174.1" y="557.7" width="1" height="1.500"/>
<rect x="272.7" y="163.3" width="1" height="1.500"/>
<rect x="272.7" y="261.9" width="1" height="1.500"/>
<rect x="272.7" y="360.5" width="1" height="1.500"/>
<rect x="272.7" y="459.1" width="1" height="1.500"/>
<rect x="272.7" y="557.7" width="1" height="1.500"/>
<rect x="371.3" y="163.3" width="1" height="1.500"/>
<rect x="371.3" y="261.9" width="1" height="1.500"/>
<rect x="371.3" y="360.5" width="1" height="1.500"/>
<rect x="371.3" y="459.1" width="1" height="1.500"/>
<rect x="371.3" y="557.7" width="1" height="1.500"/>
<rect x="469.9" y="163.3" width="1" height="1.500"/>
<rect x="469.9" y="261.9" width="1" height="1.500"/>
<rect x="469.9" y="360.5" width="1" height="1.500"/>
<rect x="469.9" y="459.1" width="1" height="1.500"/>
<rect x="469.9" y="557.7" width="1" height="1.500"/>
<rect x="568.5" y="163.3" width="1" height="1.500"/>
<rect x="568.5" y="261.9" width="1" height="1.500"/>
<rect x="568.5" y="360.5" width="1" height="1.500"/>
<rect x="568.5" y="459.1" width="1" height="1.500"/>
<rect x="568.5" y="557.7" width="1" height="1.500"/>
<rect x="667.1" y="163.3" width="1" height="1.500"/>
<rect x="667.1" y="261.9" width="1" height="1.500"/>
<rect x="667.1" y="360.5" width="1" height="1.500"/>
<rect x="667.1" y="459.1" width="1" height="1.500"/>
<rect x="667.1" y="557.7" width="1" height="1.500"/>
<rect x="765.7" y="163.3" width="1" height="1.500"/>
<rect x="765.7" y="261.9" width="1" height="1.500"/>
<rect x="765.7" y="360.5" width="1" height="1.500"/>
<rect x="765.7" y="459.1" width="1" height="1.500"/>
<rect x="765.7" y="557.7" width="1" height="1.500"/>
</g>
</svg>
<div class="abs dither" style="left:153px;top:626px;width:635px;height:16px"></div>
<div class="abs raised" style="left:153px;top:626px;width:16px;height:16px"><div class="abs" style="left:4px;top:3px;width:0;height:0;border:4px solid transparent;border-right:4px solid #000;border-left:0"></div></div>
<div class="abs raised" style="left:169px;top:626px;width:358px;height:16px"></div>
<div class="abs raised" style="left:771px;top:626px;width:16px;height:16px"><div class="abs" style="left:6px;top:3px;width:0;height:0;border:4px solid transparent;border-left:4px solid #000;border-right:0"></div></div>
<div class="abs" id="st" style="left:3px;top:646px;font-size:12px;line-height:14px;white-space:nowrap">選択範囲<span style="letter-spacing:0.54px"> (0.000,0.000)-(0.000,0.000) </span><span style="display:inline-block;transform:scaleX(0.806);transform-origin:0 50%;margin-right:-7.0px;">サイズ</span><span style="letter-spacing:0.68px">=0.000 x 0.000 [mm] = 0.000[mm^2]</span></div>
<div class="pane" style="left:534px;width:20px"></div>
<div class="pane" style="left:556px;width:29px"></div>
<div class="pane" style="left:587px;width:32px">NUM</div>
<div class="pane" style="left:621px;width:34px"></div>
<div class="pane" style="left:657px;width:115px">(-104.816,88.178)m</div>
<svg class="abs" style="left:775px;top:646px" width="13" height="13" viewBox="0 0 13 13"><path d="M12 1L1 12M12 5L5 12M12 9L9 12" stroke="#808080"/><path d="M13 1L2 12M13 5L6 12M13 9L10 12" stroke="#fff"/></svg>
</body></html>
